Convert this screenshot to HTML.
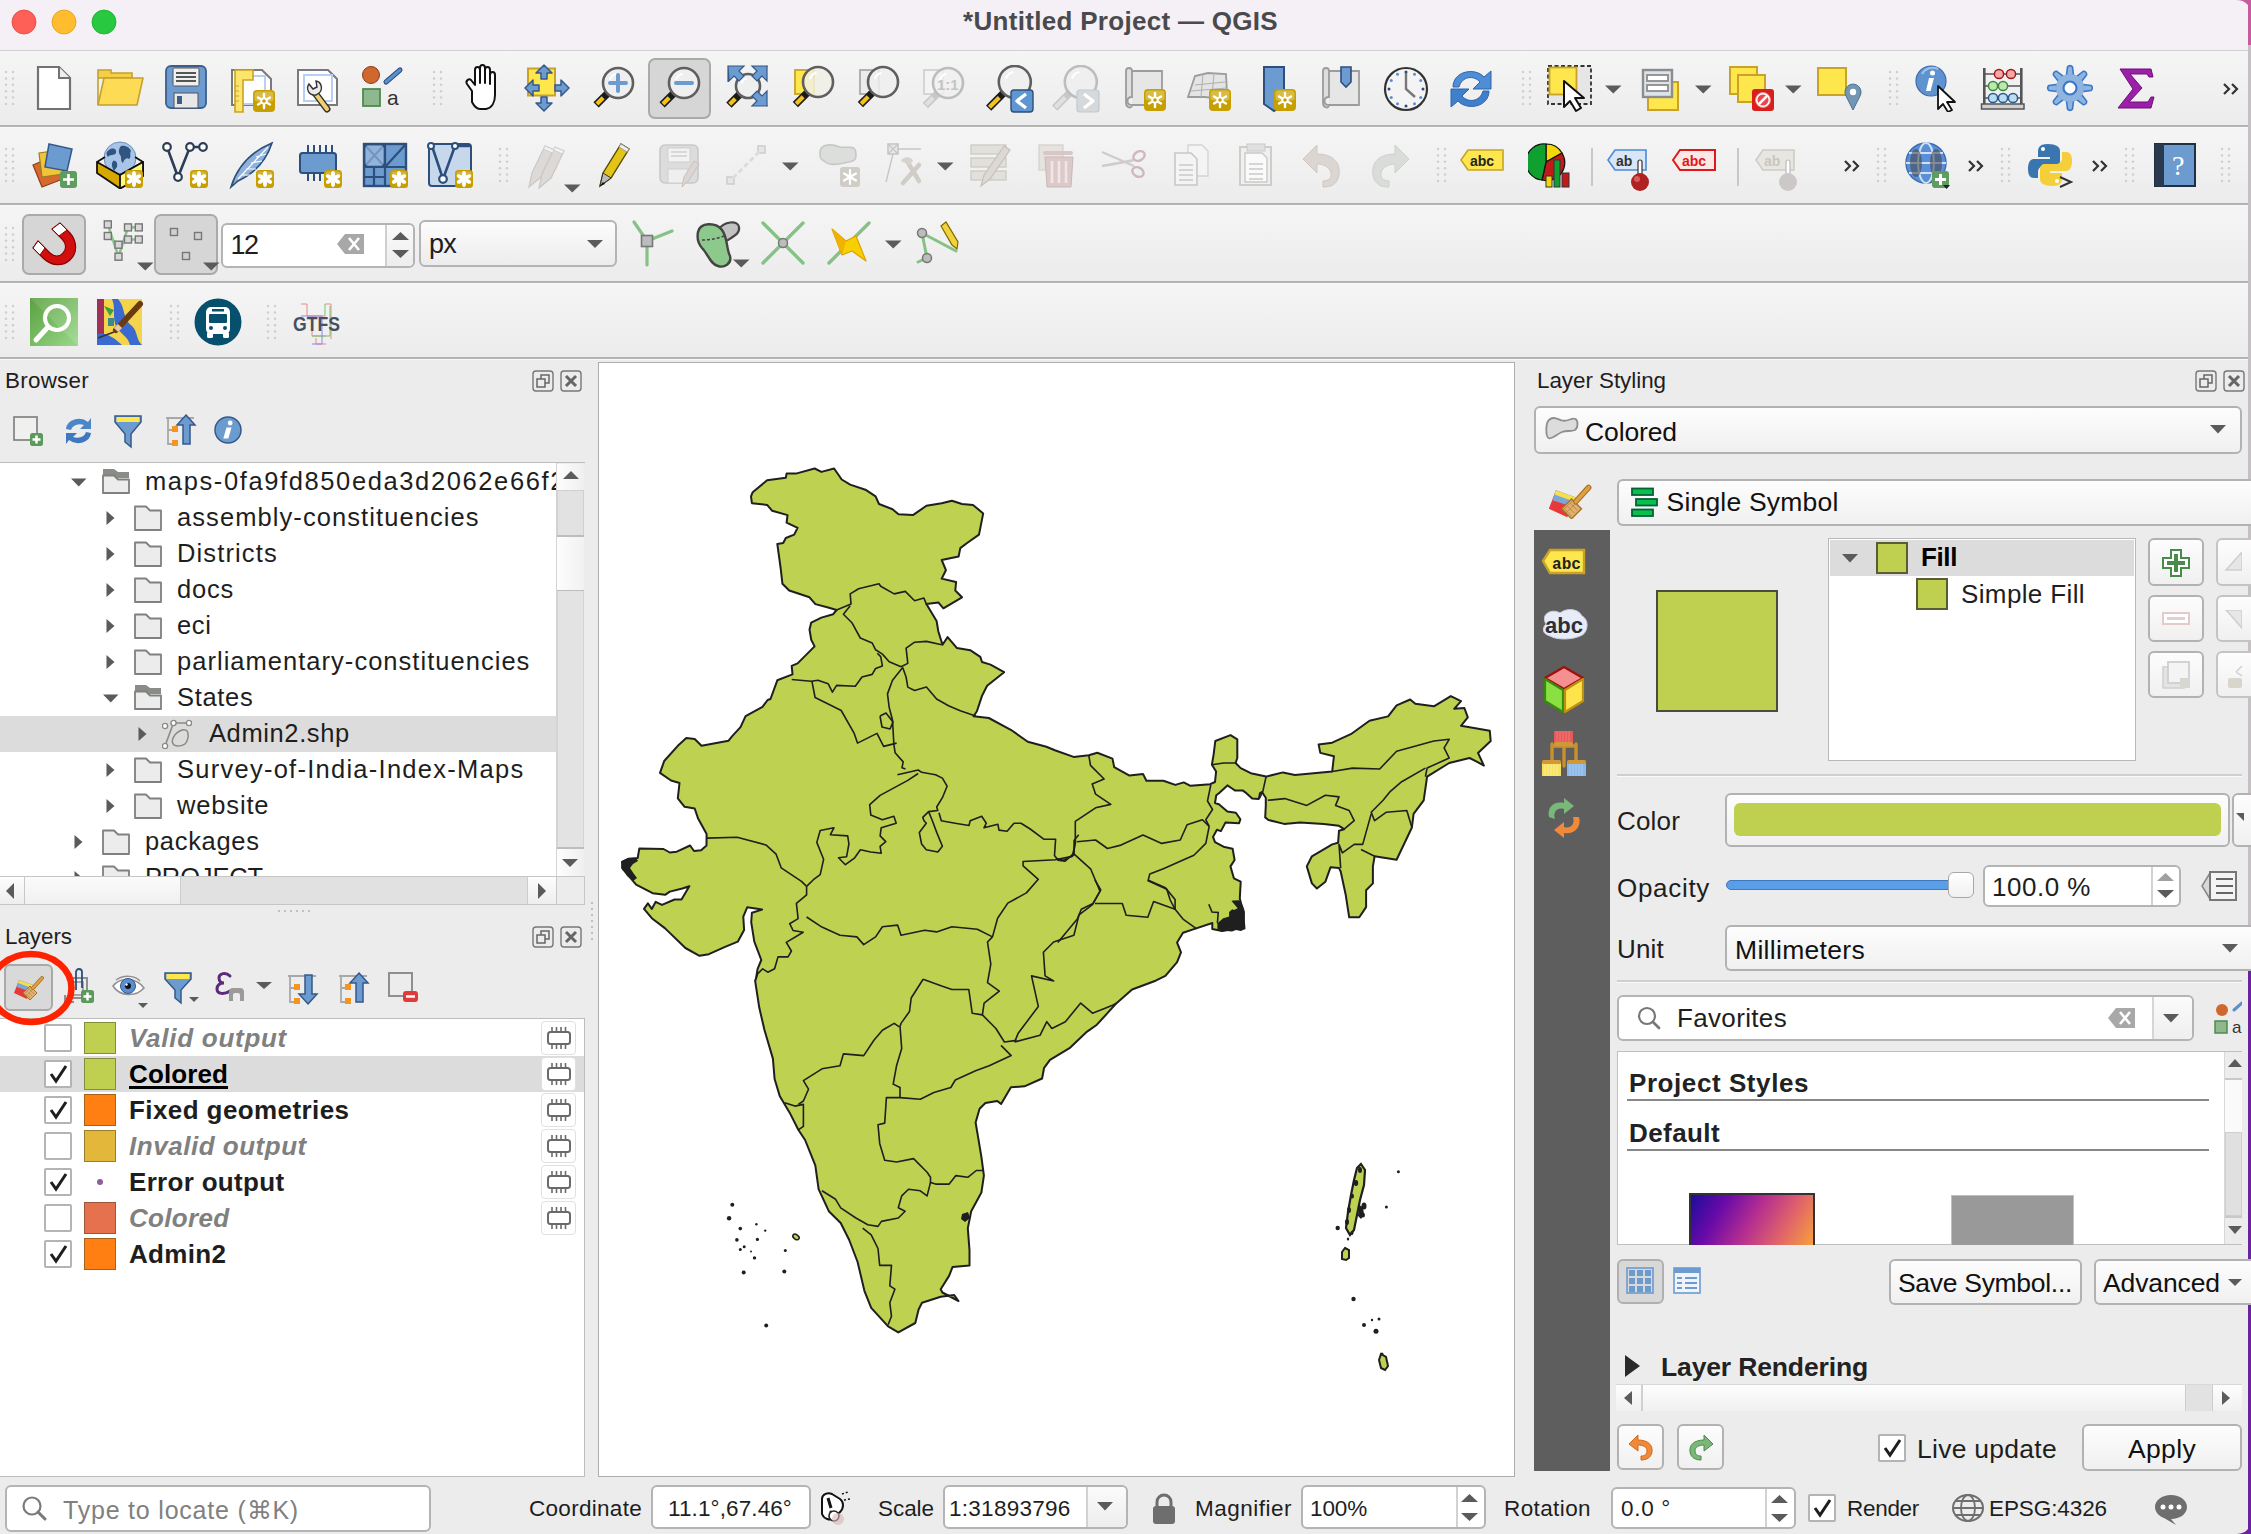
<!DOCTYPE html>
<html><head><meta charset="utf-8"><style>
html,body{margin:0;padding:0;}
body{width:2251px;height:1534px;position:relative;overflow:hidden;background:#ececec;font-family:"Liberation Sans", sans-serif;}
div,svg{box-sizing:border-box;}
</style></head><body>
<div style="position:absolute;left:0px;top:0px;width:2251px;height:51px;background:#f5f0f5;"></div>
<svg style="position:absolute;left:0px;top:0px;" width="130" height="44" viewBox="0 0 130 44"><circle cx="24" cy="22" r="12" fill="#fe5f57" stroke="#e2463f" stroke-width="0.8"/><circle cx="64" cy="22" r="12" fill="#febc2e" stroke="#e1a116" stroke-width="0.8"/><circle cx="104" cy="22" r="12" fill="#28c840" stroke="#14ae2a" stroke-width="0.8"/></svg>
<div style="position:absolute;left:963px;top:7.99px;font-size:26px;line-height:26px;font-weight:700;font-style:normal;color:#4a4a4d;white-space:pre;letter-spacing:0.303px;">*Untitled Project — QGIS</div>
<div style="position:absolute;left:0px;top:50px;width:2251px;height:1px;background:#d2d0d2;"></div>
<div style="position:absolute;left:0px;top:51px;width:2251px;height:74px;background:linear-gradient(#f5f5f5,#ececec);"></div>
<div style="position:absolute;left:0px;top:127px;width:2251px;height:76px;background:linear-gradient(#f5f5f5,#ececec);"></div>
<div style="position:absolute;left:0px;top:205px;width:2251px;height:76px;background:linear-gradient(#f5f5f5,#ececec);"></div>
<div style="position:absolute;left:0px;top:283px;width:2251px;height:76px;background:linear-gradient(#f5f5f5,#ececec);"></div>
<div style="position:absolute;left:0px;top:125px;width:2251px;height:2px;background:#b3b3b3;"></div>
<div style="position:absolute;left:0px;top:127px;width:2251px;height:1px;background:#f8f8f8;"></div>
<div style="position:absolute;left:0px;top:203px;width:2251px;height:2px;background:#b3b3b3;"></div>
<div style="position:absolute;left:0px;top:205px;width:2251px;height:1px;background:#f8f8f8;"></div>
<div style="position:absolute;left:0px;top:281px;width:2251px;height:2px;background:#b3b3b3;"></div>
<div style="position:absolute;left:0px;top:283px;width:2251px;height:1px;background:#f8f8f8;"></div>
<div style="position:absolute;left:0px;top:357px;width:2251px;height:2px;background:#b3b3b3;"></div>
<div style="position:absolute;left:0px;top:359px;width:2251px;height:1px;background:#f8f8f8;"></div>
<div style="position:absolute;left:2248px;top:0px;width:3px;height:1534px;background:#c4c0c4;"></div>
<div style="position:absolute;left:2248px;top:0px;width:3px;height:45px;background:#c85aa0;"></div>
<div style="position:absolute;left:2248px;top:960px;width:3px;height:574px;background:#6a22a0;"></div>
<svg style="position:absolute;left:2236px;top:0px;" width="15" height="16" viewBox="0 0 15 16"><path d="M0,0 H15 V16 C15,6 10,0 0,0 Z" fill="#c85aa0"/></svg>
<svg style="position:absolute;left:2236px;top:1518px;" width="15" height="16" viewBox="0 0 15 16"><path d="M0,16 H15 V0 C15,10 10,16 0,16 Z" fill="#6a22a0"/></svg>
<svg style="position:absolute;left:0;top:0" width="2251" height="400"><circle cx="6" cy="72.0" r="1.25" fill="#cfcfcf"/><circle cx="13" cy="72.0" r="1.25" fill="#cfcfcf"/><circle cx="6" cy="78.4" r="1.25" fill="#cfcfcf"/><circle cx="13" cy="78.4" r="1.25" fill="#cfcfcf"/><circle cx="6" cy="84.8" r="1.25" fill="#cfcfcf"/><circle cx="13" cy="84.8" r="1.25" fill="#cfcfcf"/><circle cx="6" cy="91.2" r="1.25" fill="#cfcfcf"/><circle cx="13" cy="91.2" r="1.25" fill="#cfcfcf"/><circle cx="6" cy="97.6" r="1.25" fill="#cfcfcf"/><circle cx="13" cy="97.6" r="1.25" fill="#cfcfcf"/><circle cx="6" cy="104.0" r="1.25" fill="#cfcfcf"/><circle cx="13" cy="104.0" r="1.25" fill="#cfcfcf"/></svg>
<svg style="position:absolute;left:30.0px;top:64.0px" width="48" height="48" viewBox="0 0 48 48"><path d="M8,3 H29 L40,14 V45 H8 Z" fill="#fff" stroke="#727272" stroke-width="2.2" stroke-linejoin="miter"/><path d="M29,3 V14 H40" fill="#efefef" stroke="#727272" stroke-width="2"/></svg>
<svg style="position:absolute;left:95.5px;top:64.0px" width="48" height="48" viewBox="0 0 48 48"><path d="M2,41 V6 H15 V9 H36 V14 H2" fill="#f6cf45" stroke="#c4a030" stroke-width="1.6"/><path d="M2,41 L8,14 H47 L41,41 Z" fill="#fedb55" stroke="#c4a030" stroke-width="1.6" stroke-linejoin="round"/></svg>
<svg style="position:absolute;left:162.0px;top:63.0px" width="48" height="48" viewBox="0 0 48 48"><rect x="4" y="3" width="40" height="42" rx="5" fill="#6b9bd1" stroke="#3b5f8c" stroke-width="1.8"/><rect x="11" y="5" width="26" height="18" rx="1.5" fill="#efefef" stroke="#555" stroke-width="1"/><path d="M14,10 H34 M14,14 H34 M14,18 H34" stroke="#555" stroke-width="1.8"/><rect x="12" y="30" width="24" height="15" fill="#e8e8e8" stroke="#555" stroke-width="1"/><rect x="15" y="33" width="5" height="8" fill="#3d5f85"/></svg>
<svg style="position:absolute;left:229.0px;top:66.0px" width="48" height="48" viewBox="0 0 48 48"><path d="M3,4 H33 L42,13 V39 H3 Z" fill="#fff" stroke="#7a7a7a" stroke-width="2"/><rect x="10" y="10" width="26" height="28" fill="none" stroke="#b8cff5" stroke-width="2"/><path d="M6,4 H24 V14 H14 V46 H6 Z" fill="#fde56b" stroke="#c9a227" stroke-width="1.6"/><path d="M6,20 H10 M6,25 H10 M6,30 H10 M6,35 H10" stroke="#c9a227" stroke-width="1.2"/><g transform="translate(24,24)"><rect x="0" y="0" width="22" height="22" rx="4" fill="#c7a000"/><rect x="1.5" y="1.5" width="19" height="10.0" rx="3" fill="#d8bb45"/><g stroke="#fff" stroke-width="2.4" stroke-linecap="round"><path d="M11.0,4.0 V18.0 M5.0,7.5 L17.0,14.5 M5.0,14.5 L17.0,7.5"/></g><circle cx="11.0" cy="11.0" r="3.6" fill="#fff"/><circle cx="11.0" cy="11.0" r="1.8" fill="#c7a000"/></g></svg>
<svg style="position:absolute;left:295.0px;top:66.0px" width="48" height="48" viewBox="0 0 48 48"><path d="M3,4 H33 L42,13 V39 H3 Z" fill="#fff" stroke="#7a7a7a" stroke-width="2"/><rect x="9" y="9" width="28" height="26" fill="none" stroke="#b8cff5" stroke-width="2"/><path d="M32,43 L20,27" stroke="#333" stroke-width="7" stroke-linecap="round"/><path d="M32,43 L20,27" stroke="#f0d070" stroke-width="4" stroke-linecap="round"/><path d="M21,29 C13,30 11,22 14,18 L18,23 L22,21 L21,15 C27,16 28,24 24,27 Z" fill="#e9e9e9" stroke="#333" stroke-width="1.4"/></svg>
<svg style="position:absolute;left:359.5px;top:64.0px" width="48" height="48" viewBox="0 0 48 48"><circle cx="11" cy="11" r="8.5" fill="#d0672f" stroke="#8a3d17" stroke-width="1"/><path d="M26,18 L40,6" stroke="#284a78" stroke-width="5" stroke-linecap="round"/><path d="M26,18 L40,6" stroke="#5a8fd0" stroke-width="3" stroke-linecap="round"/><rect x="3" y="25" width="17" height="17" fill="#8fb88f" stroke="#4f8a4f" stroke-width="1.8"/><text x="27" y="41" font-family="Liberation Sans" font-size="21" fill="#333">a</text></svg>
<svg style="position:absolute;left:0;top:0" width="2251" height="400"><circle cx="434" cy="72.0" r="1.25" fill="#cfcfcf"/><circle cx="441" cy="72.0" r="1.25" fill="#cfcfcf"/><circle cx="434" cy="78.4" r="1.25" fill="#cfcfcf"/><circle cx="441" cy="78.4" r="1.25" fill="#cfcfcf"/><circle cx="434" cy="84.8" r="1.25" fill="#cfcfcf"/><circle cx="441" cy="84.8" r="1.25" fill="#cfcfcf"/><circle cx="434" cy="91.2" r="1.25" fill="#cfcfcf"/><circle cx="441" cy="91.2" r="1.25" fill="#cfcfcf"/><circle cx="434" cy="97.6" r="1.25" fill="#cfcfcf"/><circle cx="441" cy="97.6" r="1.25" fill="#cfcfcf"/><circle cx="434" cy="104.0" r="1.25" fill="#cfcfcf"/><circle cx="441" cy="104.0" r="1.25" fill="#cfcfcf"/></svg>
<svg style="position:absolute;left:458.0px;top:64.0px" width="48" height="48" viewBox="0 0 48 48"><path d="M14,27 L9,20 C7,17 11,14 13,16 L17,21 V6 C17,2 22,2 22,6 V19 V4 C22,0 27,0 27,4 V19 V6 C27,2 32,2 32,6 V20 V11 C32,7 37,7 37,11 V31 C37,38 34,44 28,45 H22 C18,45 16,42 14,38 Z" fill="#fff" stroke="#111" stroke-width="2" stroke-linejoin="round"/></svg>
<svg style="position:absolute;left:524.0px;top:64.0px" width="48" height="48" viewBox="0 0 48 48"><rect x="4" y="4.5" width="27" height="27" fill="#fde74c" stroke="#c9a227" stroke-width="2"/><g fill="#6c9bd0" stroke="#34588a" stroke-width="1.5" stroke-linejoin="round"><path d="M20,1 L28,9 H23 V15 H17 V9 H12 Z"/><path d="M20,47 L28,39 H23 V33 H17 V39 H12 Z"/><path d="M1,24 L9,16 V21 H15 V27 H9 V32 Z"/><path d="M45,24 L37,16 V21 H31 V27 H37 V32 Z"/></g></svg>
<svg style="position:absolute;left:589.0px;top:65.0px" width="48" height="48" viewBox="0 0 48 48"><path d="M18.393500000000003,28.606499999999997 L7.079900000000004,39.9201" stroke="#1b1b1b" stroke-width="7.5" stroke-linecap="butt"/><path d="M14.150900000000004,32.84909999999999 L7.928420000000004,39.07158" stroke="#f5c21b" stroke-width="4.2"/><circle cx="29" cy="18" r="15" fill="#efefef" stroke="#5f5f5f" stroke-width="2.6"/><path d="M20.75,15.0 A9.0,9.0 0 0 1 27.5,8.7" stroke="#fff" stroke-width="2" fill="none"/><path d="M21,18 H37 M29,10 V26" stroke="#6c9bd0" stroke-width="4" stroke-linecap="round"/></svg>
<div style="position:absolute;left:648px;top:58px;width:63px;height:61px;background:#d6d6d6;border:2px solid #aaaaaa;border-radius:7px;"></div>
<svg style="position:absolute;left:655.0px;top:65.0px" width="48" height="48" viewBox="0 0 48 48"><path d="M18.393500000000003,28.606499999999997 L7.079900000000004,39.9201" stroke="#1b1b1b" stroke-width="7.5" stroke-linecap="butt"/><path d="M14.150900000000004,32.84909999999999 L7.928420000000004,39.07158" stroke="#f5c21b" stroke-width="4.2"/><circle cx="29" cy="18" r="15" fill="#efefef" stroke="#5f5f5f" stroke-width="2.6"/><path d="M20.75,15.0 A9.0,9.0 0 0 1 27.5,8.7" stroke="#fff" stroke-width="2" fill="none"/><path d="M21,18 H37" stroke="#6c9bd0" stroke-width="4" stroke-linecap="round"/></svg>
<svg style="position:absolute;left:722.0px;top:64.0px" width="48" height="48" viewBox="0 0 48 48"><path d="M17.5148,30.4852 L6.908300000000002,41.091699999999996" stroke="#1b1b1b" stroke-width="7.5" stroke-linecap="butt"/><path d="M13.272200000000002,34.727799999999995 L7.756820000000002,40.243179999999995" stroke="#f5c21b" stroke-width="4.2"/><circle cx="26" cy="22" r="12" fill="#efefef" stroke="#5f5f5f" stroke-width="2.6"/><path d="M19.4,19.6 A7.199999999999999,7.199999999999999 0 0 1 24.8,14.56" stroke="#fff" stroke-width="2" fill="none"/><g fill="#6c9bd0" stroke="#34588a" stroke-width="1.2"><path d="M6,2 H22 L17,7 L22,12 L17,17 L12,12 L7,17 Z M6,2 V18"/><path d="M46,2 H30 L35,7 L30,12 L35,17 L40,12 L45,17 V2 Z"/><path d="M46,42 H30 L35,37 L30,32 L35,27 L40,32 L45,27 V42 Z"/></g></svg>
<svg style="position:absolute;left:788.0px;top:64.0px" width="48" height="48" viewBox="0 0 48 48"><rect x="7" y="6" width="19" height="24" fill="#fde74c" stroke="#c9a227" stroke-width="1.8"/><path d="M19.393500000000003,28.606499999999997 L7.372800000000003,40.627199999999995" stroke="#1b1b1b" stroke-width="7.5" stroke-linecap="butt"/><path d="M15.150900000000004,32.84909999999999 L8.221320000000004,39.778679999999994" stroke="#f5c21b" stroke-width="4.2"/><circle cx="30" cy="18" r="15" fill="rgba(240,240,230,0.85)" stroke="#5f5f5f" stroke-width="2.6"/><path d="M21.75,15.0 A9.0,9.0 0 0 1 28.5,8.7" stroke="#fff" stroke-width="2" fill="none"/></svg>
<svg style="position:absolute;left:853.0px;top:64.0px" width="48" height="48" viewBox="0 0 48 48"><rect x="7" y="6" width="19" height="24" fill="#ececec" stroke="#aaaaaa" stroke-width="1.8"/><path d="M19.393500000000003,28.606499999999997 L7.372800000000003,40.627199999999995" stroke="#1b1b1b" stroke-width="7.5" stroke-linecap="butt"/><path d="M15.150900000000004,32.84909999999999 L8.221320000000004,39.778679999999994" stroke="#f5c21b" stroke-width="4.2"/><circle cx="30" cy="18" r="15" fill="rgba(238,238,238,0.85)" stroke="#5f5f5f" stroke-width="2.6"/><path d="M21.75,15.0 A9.0,9.0 0 0 1 28.5,8.7" stroke="#fff" stroke-width="2" fill="none"/></svg>
<svg style="position:absolute;left:919.0px;top:65.0px" width="48" height="48" viewBox="0 0 48 48"><rect x="5" y="5" width="19" height="24" fill="#f4f4f4" stroke="#d2d2d2" stroke-width="1.8"/><path d="M18.393500000000003,28.606499999999997 L6.372800000000003,40.627199999999995" stroke="#c8c8c8" stroke-width="7.5" stroke-linecap="butt"/><path d="M14.150900000000004,32.84909999999999 L7.221320000000003,39.778679999999994" stroke="#e0e0e0" stroke-width="4.2"/><circle cx="29" cy="18" r="15" fill="rgba(240,240,240,0.8)" stroke="#bdbdbd" stroke-width="2.6"/><path d="M20.75,15.0 A9.0,9.0 0 0 1 27.5,8.7" stroke="#fff" stroke-width="2" fill="none"/><text x="18" y="25" font-family="Liberation Sans" font-weight="bold" font-size="15" fill="#c4c4c4">1:1</text></svg>
<svg style="position:absolute;left:986.0px;top:65.0px" width="48" height="48" viewBox="0 0 48 48"><path d="M17.486400000000003,28.2136 L2.637300000000005,43.0627" stroke="#1b1b1b" stroke-width="7.5" stroke-linecap="butt"/><path d="M13.243800000000004,32.456199999999995 L3.485820000000005,42.21418" stroke="#f5c21b" stroke-width="4.2"/><circle cx="28.8" cy="16.9" r="16" fill="#efefef" stroke="#5f5f5f" stroke-width="2.6"/><path d="M20.0,13.7 A9.6,9.6 0 0 1 27.2,6.979999999999999" stroke="#fff" stroke-width="2" fill="none"/><rect x="25" y="25" width="22" height="22" rx="3" fill="#5f95d0" stroke="#2c4f7a" stroke-width="1.4"/><path d="M40,29 L31,36 L40,43" fill="none" stroke="#fff" stroke-width="3.4" stroke-linejoin="round"/></svg>
<svg style="position:absolute;left:1052.0px;top:65.0px" width="48" height="48" viewBox="0 0 48 48"><path d="M17.486400000000003,28.2136 L2.637300000000005,43.0627" stroke="#c8c8c8" stroke-width="7.5" stroke-linecap="butt"/><path d="M13.243800000000004,32.456199999999995 L3.485820000000005,42.21418" stroke="#e0e0e0" stroke-width="4.2"/><circle cx="28.8" cy="16.9" r="16" fill="#efefef" stroke="#bdbdbd" stroke-width="2.6"/><path d="M20.0,13.7 A9.6,9.6 0 0 1 27.2,6.979999999999999" stroke="#fff" stroke-width="2" fill="none"/><rect x="25" y="25" width="22" height="22" rx="3" fill="#d6d9dc" stroke="#c4c8cc" stroke-width="1.2"/><path d="M32,29 L41,36 L32,43" fill="none" stroke="#fff" stroke-width="3.4" stroke-linejoin="round"/></svg>
<svg style="position:absolute;left:1120.0px;top:65.0px" width="48" height="48" viewBox="0 0 48 48"><path d="M12,6 H42 V40 H12" fill="#e6e6e6" stroke="#9c9c9c" stroke-width="1.8"/><path d="M12,40 C6,40 6,32 12,32 V6 C12,2 6,2 6,6 V38 C6,43 12,44 12,40" fill="#dedede" stroke="#9c9c9c" stroke-width="1.8"/><g transform="translate(24,24)"><rect x="0" y="0" width="22" height="22" rx="4" fill="#c7a000"/><rect x="1.5" y="1.5" width="19" height="10.0" rx="3" fill="#d8bb45"/><g stroke="#fff" stroke-width="2.4" stroke-linecap="round"><path d="M11.0,4.0 V18.0 M5.0,7.5 L17.0,14.5 M5.0,14.5 L17.0,7.5"/></g><circle cx="11.0" cy="11.0" r="3.6" fill="#fff"/><circle cx="11.0" cy="11.0" r="1.8" fill="#c7a000"/></g></svg>
<svg style="position:absolute;left:1185.0px;top:65.0px" width="48" height="48" viewBox="0 0 48 48"><path d="M3,32 L10,11 L23,8 L41,9 L42,29 L28,33 L20,32 Z" fill="#e4e4e4" stroke="#9c9c9c" stroke-width="1.8"/><path d="M10,20 L40,17 M6,26 L42,23 M18,9 L16,32 M29,8 L27,33" stroke="#b0b0b0" stroke-width="1" fill="none"/><g transform="translate(24,24)"><rect x="0" y="0" width="22" height="22" rx="4" fill="#c7a000"/><rect x="1.5" y="1.5" width="19" height="10.0" rx="3" fill="#d8bb45"/><g stroke="#fff" stroke-width="2.4" stroke-linecap="round"><path d="M11.0,4.0 V18.0 M5.0,7.5 L17.0,14.5 M5.0,14.5 L17.0,7.5"/></g><circle cx="11.0" cy="11.0" r="3.6" fill="#fff"/><circle cx="11.0" cy="11.0" r="1.8" fill="#c7a000"/></g></svg>
<svg style="position:absolute;left:1252.0px;top:65.0px" width="48" height="48" viewBox="0 0 48 48"><path d="M12,2 H32 V39 L22,46 L12,39 Z" fill="#6b9bd1" stroke="#2e4f7c" stroke-width="2"/><g transform="translate(22,24)"><rect x="0" y="0" width="22" height="22" rx="4" fill="#c7a000"/><rect x="1.5" y="1.5" width="19" height="10.0" rx="3" fill="#d8bb45"/><g stroke="#fff" stroke-width="2.4" stroke-linecap="round"><path d="M11.0,4.0 V18.0 M5.0,7.5 L17.0,14.5 M5.0,14.5 L17.0,7.5"/></g><circle cx="11.0" cy="11.0" r="3.6" fill="#fff"/><circle cx="11.0" cy="11.0" r="1.8" fill="#c7a000"/></g></svg>
<svg style="position:absolute;left:1317.0px;top:65.0px" width="48" height="48" viewBox="0 0 48 48"><path d="M12,6 H42 V40 H12" fill="#e6e6e6" stroke="#9c9c9c" stroke-width="1.8"/><path d="M12,40 C6,40 6,32 12,32 V6 C12,2 6,2 6,6 V38 C6,43 12,44 12,40" fill="#dedede" stroke="#9c9c9c" stroke-width="1.8"/><path d="M24,2 H34 V17 L29,22 L24,17 Z" fill="#6b9bd1" stroke="#2e4f7c" stroke-width="1.6"/></svg>
<svg style="position:absolute;left:1382.0px;top:65.0px" width="48" height="48" viewBox="0 0 48 48"><circle cx="24" cy="24" r="21" fill="#f4f4f4" stroke="#333" stroke-width="2.2"/><circle cx="24.00" cy="7.00" r="1.5" fill="#2b4a7a"/><circle cx="32.50" cy="9.28" r="1.5" fill="#5a8ed0"/><circle cx="38.72" cy="15.50" r="1.5" fill="#5a8ed0"/><circle cx="41.00" cy="24.00" r="1.5" fill="#2b4a7a"/><circle cx="38.72" cy="32.50" r="1.5" fill="#5a8ed0"/><circle cx="32.50" cy="38.72" r="1.5" fill="#5a8ed0"/><circle cx="24.00" cy="41.00" r="1.5" fill="#2b4a7a"/><circle cx="15.50" cy="38.72" r="1.5" fill="#5a8ed0"/><circle cx="9.28" cy="32.50" r="1.5" fill="#5a8ed0"/><circle cx="7.00" cy="24.00" r="1.5" fill="#2b4a7a"/><circle cx="9.28" cy="15.50" r="1.5" fill="#5a8ed0"/><circle cx="15.50" cy="9.28" r="1.5" fill="#5a8ed0"/><path d="M24,8 V24 L33,32" fill="none" stroke="#777" stroke-width="2.4"/></svg>
<svg style="position:absolute;left:1447.0px;top:65.0px" width="48" height="48" viewBox="0 0 48 48"><path d="M6,22 C6,6 28,2 37,12 L44,6 V24 H26 L33,17 C27,10 15,11 12,22 Z" fill="#4f8ed6" stroke="#2d64ad" stroke-width="1"/><path d="M42,26 C42,42 20,46 11,36 L4,42 V24 H22 L15,31 C21,38 33,37 36,26 Z" fill="#3f7fcb" stroke="#2d64ad" stroke-width="1"/></svg>
<svg style="position:absolute;left:0;top:0" width="2251" height="400"><circle cx="1523" cy="72.0" r="1.25" fill="#cfcfcf"/><circle cx="1530" cy="72.0" r="1.25" fill="#cfcfcf"/><circle cx="1523" cy="78.4" r="1.25" fill="#cfcfcf"/><circle cx="1530" cy="78.4" r="1.25" fill="#cfcfcf"/><circle cx="1523" cy="84.8" r="1.25" fill="#cfcfcf"/><circle cx="1530" cy="84.8" r="1.25" fill="#cfcfcf"/><circle cx="1523" cy="91.2" r="1.25" fill="#cfcfcf"/><circle cx="1530" cy="91.2" r="1.25" fill="#cfcfcf"/><circle cx="1523" cy="97.6" r="1.25" fill="#cfcfcf"/><circle cx="1530" cy="97.6" r="1.25" fill="#cfcfcf"/><circle cx="1523" cy="104.0" r="1.25" fill="#cfcfcf"/><circle cx="1530" cy="104.0" r="1.25" fill="#cfcfcf"/></svg>
<svg style="position:absolute;left:1546.0px;top:64.0px" width="48" height="48" viewBox="0 0 48 48"><rect x="2" y="2" width="43" height="38" fill="#e6e6e6" stroke="#333" stroke-width="1.8" stroke-dasharray="4,2.5"/><rect x="3.5" y="3.5" width="27" height="27" fill="#fde74c" stroke="#c9a227" stroke-width="1.8"/><path d="M18,17 L18,43 L24,37 L30,47 L35,44 L29,34 L38,34 Z" fill="#fff" stroke="#111" stroke-width="2" stroke-linejoin="round"/></svg>
<svg style="position:absolute;left:1605px;top:85px;" width="17" height="9" viewBox="0 0 17 9"><path d="M0,0.5 H16.5 L8.25,8.5 Z" fill="#5b5b5b"/></svg>
<svg style="position:absolute;left:1640.0px;top:67.0px" width="48" height="48" viewBox="0 0 48 48"><rect x="8" y="15" width="30" height="28" fill="#fde74c" stroke="#c9a227" stroke-width="2"/><rect x="3" y="3" width="29" height="27" fill="#dde3ea" stroke="#8c8c8c" stroke-width="2.4"/><rect x="7" y="8" width="21" height="6" fill="#fff" stroke="#8c8c8c" stroke-width="1.8"/><rect x="7" y="18" width="21" height="6" fill="#fff" stroke="#8c8c8c" stroke-width="1.8"/></svg>
<svg style="position:absolute;left:1695px;top:85px;" width="17" height="9" viewBox="0 0 17 9"><path d="M0,0.5 H16.5 L8.25,8.5 Z" fill="#5b5b5b"/></svg>
<svg style="position:absolute;left:1728.0px;top:65.0px" width="48" height="48" viewBox="0 0 48 48"><rect x="2" y="2" width="27" height="27" fill="#fde74c" stroke="#c9a227" stroke-width="2"/><rect x="10" y="10" width="27" height="27" fill="#fde74c" stroke="#c9a227" stroke-width="2"/><rect x="24" y="24" width="22" height="22" rx="3" fill="#d91e1e"/><circle cx="35" cy="35" r="7.5" fill="#fff" stroke="#e88" stroke-width="1"/><circle cx="35" cy="35" r="5.5" fill="#e44"/><path d="M31,39 L39,31" stroke="#fff" stroke-width="2.5"/></svg>
<svg style="position:absolute;left:1785px;top:85px;" width="17" height="9" viewBox="0 0 17 9"><path d="M0,0.5 H16.5 L8.25,8.5 Z" fill="#5b5b5b"/></svg>
<svg style="position:absolute;left:1816.0px;top:64.0px" width="48" height="48" viewBox="0 0 48 48"><rect x="2" y="4" width="28" height="27" fill="#fde74c" stroke="#c9a227" stroke-width="2"/><path d="M37,46 L30,32 A8,8 0 1 1 44,32 Z" fill="#7396b4" stroke="#4d6f8d" stroke-width="1"/><circle cx="37" cy="28" r="3.2" fill="#fff"/></svg>
<svg style="position:absolute;left:0;top:0" width="2251" height="400"><circle cx="1890" cy="72.0" r="1.25" fill="#cfcfcf"/><circle cx="1897" cy="72.0" r="1.25" fill="#cfcfcf"/><circle cx="1890" cy="78.4" r="1.25" fill="#cfcfcf"/><circle cx="1897" cy="78.4" r="1.25" fill="#cfcfcf"/><circle cx="1890" cy="84.8" r="1.25" fill="#cfcfcf"/><circle cx="1897" cy="84.8" r="1.25" fill="#cfcfcf"/><circle cx="1890" cy="91.2" r="1.25" fill="#cfcfcf"/><circle cx="1897" cy="91.2" r="1.25" fill="#cfcfcf"/><circle cx="1890" cy="97.6" r="1.25" fill="#cfcfcf"/><circle cx="1897" cy="97.6" r="1.25" fill="#cfcfcf"/><circle cx="1890" cy="104.0" r="1.25" fill="#cfcfcf"/><circle cx="1897" cy="104.0" r="1.25" fill="#cfcfcf"/></svg>
<svg style="position:absolute;left:1914.0px;top:64.0px" width="48" height="48" viewBox="0 0 48 48"><circle cx="17" cy="17" r="15" fill="#5f92d0" stroke="#3a6aa5" stroke-width="1.2"/><path d="M8,10 A12,12 0 0 1 24,5" stroke="#9cc0ea" stroke-width="2" fill="none"/><path d="M15,14 H20 L16.5,27 H12 Z" fill="#fff"/><circle cx="18.5" cy="9" r="2.5" fill="#fff"/><path d="M24,22 L24,45 L29,40 L34,48 L38,46 L33,38 L41,38 Z" fill="#fff" stroke="#111" stroke-width="1.8" stroke-linejoin="round"/></svg>
<svg style="position:absolute;left:1980.0px;top:64.0px" width="48" height="48" viewBox="0 0 48 48"><rect x="3" y="4" width="2.6" height="38" fill="#555"/><rect x="40" y="4" width="2.6" height="38" fill="#555"/><rect x="1.5" y="40" width="42.5" height="5" fill="#d0d0d0" stroke="#555" stroke-width="1.5"/><path d="M5,10 H40 M5,22 H40 M5,34 H40" stroke="#555" stroke-width="1.6"/><circle cx="19" cy="10" r="4.6" fill="#f4a8a8" stroke="#a01818" stroke-width="1.5"/><circle cx="31" cy="10" r="4.6" fill="#f4a8a8" stroke="#a01818" stroke-width="1.5"/><circle cx="13" cy="22" r="4.6" fill="#bce8b4" stroke="#3a8a3a" stroke-width="1.5"/><circle cx="23" cy="22" r="4.6" fill="#bce8b4" stroke="#3a8a3a" stroke-width="1.5"/><circle cx="13" cy="34" r="4.6" fill="#bcdcf4" stroke="#2a5a8a" stroke-width="1.5"/><circle cx="23" cy="34" r="4.6" fill="#bcdcf4" stroke="#2a5a8a" stroke-width="1.5"/><circle cx="33" cy="34" r="4.6" fill="#bcdcf4" stroke="#2a5a8a" stroke-width="1.5"/></svg>
<svg style="position:absolute;left:2046.0px;top:64.0px" width="48" height="48" viewBox="0 0 48 48"><path d="M20.5,11 L21.5,3 A3,3 0 0 1 26.5,3 L27.5,11 Z" fill="#8fb4e0" stroke="#3a78c8" stroke-width="1.6" transform="rotate(0 24 24)"/><path d="M20.5,11 L21.5,3 A3,3 0 0 1 26.5,3 L27.5,11 Z" fill="#8fb4e0" stroke="#3a78c8" stroke-width="1.6" transform="rotate(45 24 24)"/><path d="M20.5,11 L21.5,3 A3,3 0 0 1 26.5,3 L27.5,11 Z" fill="#8fb4e0" stroke="#3a78c8" stroke-width="1.6" transform="rotate(90 24 24)"/><path d="M20.5,11 L21.5,3 A3,3 0 0 1 26.5,3 L27.5,11 Z" fill="#8fb4e0" stroke="#3a78c8" stroke-width="1.6" transform="rotate(135 24 24)"/><path d="M20.5,11 L21.5,3 A3,3 0 0 1 26.5,3 L27.5,11 Z" fill="#8fb4e0" stroke="#3a78c8" stroke-width="1.6" transform="rotate(180 24 24)"/><path d="M20.5,11 L21.5,3 A3,3 0 0 1 26.5,3 L27.5,11 Z" fill="#8fb4e0" stroke="#3a78c8" stroke-width="1.6" transform="rotate(225 24 24)"/><path d="M20.5,11 L21.5,3 A3,3 0 0 1 26.5,3 L27.5,11 Z" fill="#8fb4e0" stroke="#3a78c8" stroke-width="1.6" transform="rotate(270 24 24)"/><path d="M20.5,11 L21.5,3 A3,3 0 0 1 26.5,3 L27.5,11 Z" fill="#8fb4e0" stroke="#3a78c8" stroke-width="1.6" transform="rotate(315 24 24)"/><circle cx="24" cy="24" r="14" fill="#8fb4e0"/><circle cx="24" cy="24" r="6.5" fill="#fff" stroke="#3a78c8" stroke-width="2.2"/></svg>
<svg style="position:absolute;left:2112.0px;top:64.0px" width="48" height="48" viewBox="0 0 48 48"><path d="M8,5 H39 L41,13 H37 L35,10 H18 L30,24 L17,38 H36 L39,33 H42 L39,44 H6 L21,25 Z" fill="#9b1fa8" stroke="#6d1076" stroke-width="1"/></svg>
<svg style="position:absolute;left:2222px;top:81px;" width="18" height="16" viewBox="0 0 18 16"><path d="M2,3 L7,8 L2,13 M10,3 L15,8 L10,13" fill="none" stroke="#333" stroke-width="2.2"/></svg>
<svg style="position:absolute;left:0;top:0" width="2251" height="400"><circle cx="6" cy="149.0" r="1.25" fill="#cfcfcf"/><circle cx="13" cy="149.0" r="1.25" fill="#cfcfcf"/><circle cx="6" cy="155.4" r="1.25" fill="#cfcfcf"/><circle cx="13" cy="155.4" r="1.25" fill="#cfcfcf"/><circle cx="6" cy="161.8" r="1.25" fill="#cfcfcf"/><circle cx="13" cy="161.8" r="1.25" fill="#cfcfcf"/><circle cx="6" cy="168.2" r="1.25" fill="#cfcfcf"/><circle cx="13" cy="168.2" r="1.25" fill="#cfcfcf"/><circle cx="6" cy="174.6" r="1.25" fill="#cfcfcf"/><circle cx="13" cy="174.6" r="1.25" fill="#cfcfcf"/><circle cx="6" cy="181.0" r="1.25" fill="#cfcfcf"/><circle cx="13" cy="181.0" r="1.25" fill="#cfcfcf"/></svg>
<svg style="position:absolute;left:30.0px;top:141.0px" width="48" height="48" viewBox="0 0 48 48"><path d="M3,24 L24,15 L33,38 L12,46 Z" fill="#d8692e" stroke="#8a4018" stroke-width="1.2"/><path d="M9,12 L30,9 L33,33 L12,36 Z" fill="#f0c53a" stroke="#9b7c20" stroke-width="1.2"/><path d="M19,3 L42,8 L37,30 L15,26 Z" fill="#6c9bd0" stroke="#34588a" stroke-width="1.5"/><g transform="translate(30,30)"><rect width="17" height="17" rx="3" fill="#5f9c5f"/><path d="M8.5,3 V14 M3,8.5 H14" stroke="#fff" stroke-width="2.6"/></g></svg>
<svg style="position:absolute;left:96.0px;top:141.0px" width="48" height="48" viewBox="0 0 48 48"><circle cx="24" cy="17" r="16" fill="#a8c5e8" stroke="#6a8fbf" stroke-width="1"/><path d="M13,9 C17,6 21,8 20,12 C18,15 14,13 12,16 C10,13 10,11 13,9 Z M25,5 C30,4 34,7 35,10 C33,13 36,16 33,18 C30,16 28,19 27,22 C24,20 26,16 24,14 C22,11 23,7 25,5 Z M17,20 C20,19 22,22 21,26 L18,30 C16,26 15,23 17,20 Z" fill="#2f5580"/><path d="M1,21 L24,34 L47,21 L47,35 L24,47.5 L1,32 Z" fill="#d6a800" stroke="#111" stroke-width="1.8" stroke-linejoin="round"/><path d="M24,34 L47,21 V35 L24,47.5 Z" fill="#fff67a" stroke="#111" stroke-width="1.8" stroke-linejoin="round"/><path d="M1,21 L9,16 M47,21 L39,16" stroke="#111" stroke-width="1.8"/><g transform="translate(29,29)"><rect width="18" height="18" rx="3.5" fill="#c7a000"/><rect x="1.5" y="1.5" width="15" height="7.0" rx="2.5" fill="#d4b440"/><ellipse cx="9.0" cy="4.4" rx="2" ry="3.4" fill="#fff" transform="rotate(0 9.0 9.0)"/><ellipse cx="9.0" cy="4.4" rx="2" ry="3.4" fill="#fff" transform="rotate(60 9.0 9.0)"/><ellipse cx="9.0" cy="4.4" rx="2" ry="3.4" fill="#fff" transform="rotate(120 9.0 9.0)"/><ellipse cx="9.0" cy="4.4" rx="2" ry="3.4" fill="#fff" transform="rotate(180 9.0 9.0)"/><ellipse cx="9.0" cy="4.4" rx="2" ry="3.4" fill="#fff" transform="rotate(240 9.0 9.0)"/><ellipse cx="9.0" cy="4.4" rx="2" ry="3.4" fill="#fff" transform="rotate(300 9.0 9.0)"/><circle cx="9.0" cy="9.0" r="2" fill="#fff"/></g></svg>
<svg style="position:absolute;left:162.0px;top:141.0px" width="48" height="48" viewBox="0 0 48 48"><path d="M5,6 L16,36 L28,6 H41" fill="none" stroke="#2c3e55" stroke-width="2.6"/><circle cx="5" cy="6" r="3.8" fill="#fff" stroke="#2c3e55" stroke-width="2.2"/><circle cx="16" cy="36" r="3.8" fill="#fff" stroke="#2c3e55" stroke-width="2.2"/><circle cx="28" cy="6" r="3.8" fill="#fff" stroke="#2c3e55" stroke-width="2.2"/><circle cx="41" cy="6" r="3.8" fill="#fff" stroke="#2c3e55" stroke-width="2.2"/><g transform="translate(28,29)"><rect width="18" height="18" rx="3.5" fill="#c7a000"/><rect x="1.5" y="1.5" width="15" height="7.0" rx="2.5" fill="#d4b440"/><ellipse cx="9.0" cy="4.4" rx="2" ry="3.4" fill="#fff" transform="rotate(0 9.0 9.0)"/><ellipse cx="9.0" cy="4.4" rx="2" ry="3.4" fill="#fff" transform="rotate(60 9.0 9.0)"/><ellipse cx="9.0" cy="4.4" rx="2" ry="3.4" fill="#fff" transform="rotate(120 9.0 9.0)"/><ellipse cx="9.0" cy="4.4" rx="2" ry="3.4" fill="#fff" transform="rotate(180 9.0 9.0)"/><ellipse cx="9.0" cy="4.4" rx="2" ry="3.4" fill="#fff" transform="rotate(240 9.0 9.0)"/><ellipse cx="9.0" cy="4.4" rx="2" ry="3.4" fill="#fff" transform="rotate(300 9.0 9.0)"/><circle cx="9.0" cy="9.0" r="2" fill="#fff"/></g></svg>
<svg style="position:absolute;left:228.0px;top:141.0px" width="48" height="48" viewBox="0 0 48 48"><path d="M3,46 C8,30 20,12 44,2 C40,14 32,30 10,40 Z" fill="#8fb2dc" stroke="#2c4f7c" stroke-width="1.6"/><path d="M10,38 L40,6 M14,34 L22,34 M18,28 L28,28 M23,22 L34,20 M28,16 L38,13" stroke="#fff" stroke-width="1.2"/><g transform="translate(28,29)"><rect width="18" height="18" rx="3.5" fill="#c7a000"/><rect x="1.5" y="1.5" width="15" height="7.0" rx="2.5" fill="#d4b440"/><ellipse cx="9.0" cy="4.4" rx="2" ry="3.4" fill="#fff" transform="rotate(0 9.0 9.0)"/><ellipse cx="9.0" cy="4.4" rx="2" ry="3.4" fill="#fff" transform="rotate(60 9.0 9.0)"/><ellipse cx="9.0" cy="4.4" rx="2" ry="3.4" fill="#fff" transform="rotate(120 9.0 9.0)"/><ellipse cx="9.0" cy="4.4" rx="2" ry="3.4" fill="#fff" transform="rotate(180 9.0 9.0)"/><ellipse cx="9.0" cy="4.4" rx="2" ry="3.4" fill="#fff" transform="rotate(240 9.0 9.0)"/><ellipse cx="9.0" cy="4.4" rx="2" ry="3.4" fill="#fff" transform="rotate(300 9.0 9.0)"/><circle cx="9.0" cy="9.0" r="2" fill="#fff"/></g></svg>
<svg style="position:absolute;left:296.0px;top:141.0px" width="48" height="48" viewBox="0 0 48 48"><path d="M12,4 V12 M18,4 V12 M24,4 V12 M30,4 V12 M36,4 V12 M12,32 V40 M18,32 V40 M24,32 V40" stroke="#2c4f7c" stroke-width="2"/><rect x="4" y="12" width="36" height="20" rx="2.5" fill="#6c9bd0" stroke="#2c4f7c" stroke-width="2"/><g transform="translate(28,29)"><rect width="18" height="18" rx="3.5" fill="#c7a000"/><rect x="1.5" y="1.5" width="15" height="7.0" rx="2.5" fill="#d4b440"/><ellipse cx="9.0" cy="4.4" rx="2" ry="3.4" fill="#fff" transform="rotate(0 9.0 9.0)"/><ellipse cx="9.0" cy="4.4" rx="2" ry="3.4" fill="#fff" transform="rotate(60 9.0 9.0)"/><ellipse cx="9.0" cy="4.4" rx="2" ry="3.4" fill="#fff" transform="rotate(120 9.0 9.0)"/><ellipse cx="9.0" cy="4.4" rx="2" ry="3.4" fill="#fff" transform="rotate(180 9.0 9.0)"/><ellipse cx="9.0" cy="4.4" rx="2" ry="3.4" fill="#fff" transform="rotate(240 9.0 9.0)"/><ellipse cx="9.0" cy="4.4" rx="2" ry="3.4" fill="#fff" transform="rotate(300 9.0 9.0)"/><circle cx="9.0" cy="9.0" r="2" fill="#fff"/></g></svg>
<svg style="position:absolute;left:361.0px;top:141.0px" width="48" height="48" viewBox="0 0 48 48"><rect x="3" y="3" width="42" height="42" fill="#6c9bd0" stroke="#2c4f7c" stroke-width="2.4"/><path d="M3,26 H45 M24,3 V45 M3,3 L24,26 M24,3 L3,26 M45,3 L24,26 M3,36 H24 M13,26 V45" stroke="#2c4f7c" stroke-width="2.2"/><rect x="5" y="5" width="17" height="19" fill="#a8c5e8" opacity="0.6"/><g transform="translate(29,29)"><rect width="18" height="18" rx="3.5" fill="#c7a000"/><rect x="1.5" y="1.5" width="15" height="7.0" rx="2.5" fill="#d4b440"/><ellipse cx="9.0" cy="4.4" rx="2" ry="3.4" fill="#fff" transform="rotate(0 9.0 9.0)"/><ellipse cx="9.0" cy="4.4" rx="2" ry="3.4" fill="#fff" transform="rotate(60 9.0 9.0)"/><ellipse cx="9.0" cy="4.4" rx="2" ry="3.4" fill="#fff" transform="rotate(120 9.0 9.0)"/><ellipse cx="9.0" cy="4.4" rx="2" ry="3.4" fill="#fff" transform="rotate(180 9.0 9.0)"/><ellipse cx="9.0" cy="4.4" rx="2" ry="3.4" fill="#fff" transform="rotate(240 9.0 9.0)"/><ellipse cx="9.0" cy="4.4" rx="2" ry="3.4" fill="#fff" transform="rotate(300 9.0 9.0)"/><circle cx="9.0" cy="9.0" r="2" fill="#fff"/></g></svg>
<svg style="position:absolute;left:426.0px;top:141.0px" width="48" height="48" viewBox="0 0 48 48"><rect x="3" y="3" width="42" height="42" rx="3" fill="#c8d8ec" stroke="#2c4f7c" stroke-width="2"/><path d="M6,5 L17,38 L29,5 H44" fill="none" stroke="#2c4f7c" stroke-width="2.6"/><circle cx="17" cy="38" r="3.8" fill="#fff" stroke="#2c4f7c" stroke-width="2.2"/><circle cx="29" cy="5" r="3" fill="#fff" stroke="#2c4f7c" stroke-width="2"/><circle cx="5" cy="5" r="3" fill="#fff" stroke="#2c4f7c" stroke-width="2"/><g transform="translate(29,29)"><rect width="18" height="18" rx="3.5" fill="#c7a000"/><rect x="1.5" y="1.5" width="15" height="7.0" rx="2.5" fill="#d4b440"/><ellipse cx="9.0" cy="4.4" rx="2" ry="3.4" fill="#fff" transform="rotate(0 9.0 9.0)"/><ellipse cx="9.0" cy="4.4" rx="2" ry="3.4" fill="#fff" transform="rotate(60 9.0 9.0)"/><ellipse cx="9.0" cy="4.4" rx="2" ry="3.4" fill="#fff" transform="rotate(120 9.0 9.0)"/><ellipse cx="9.0" cy="4.4" rx="2" ry="3.4" fill="#fff" transform="rotate(180 9.0 9.0)"/><ellipse cx="9.0" cy="4.4" rx="2" ry="3.4" fill="#fff" transform="rotate(240 9.0 9.0)"/><ellipse cx="9.0" cy="4.4" rx="2" ry="3.4" fill="#fff" transform="rotate(300 9.0 9.0)"/><circle cx="9.0" cy="9.0" r="2" fill="#fff"/></g></svg>
<svg style="position:absolute;left:0;top:0" width="2251" height="400"><circle cx="500" cy="149.0" r="1.25" fill="#cfcfcf"/><circle cx="507" cy="149.0" r="1.25" fill="#cfcfcf"/><circle cx="500" cy="155.4" r="1.25" fill="#cfcfcf"/><circle cx="507" cy="155.4" r="1.25" fill="#cfcfcf"/><circle cx="500" cy="161.8" r="1.25" fill="#cfcfcf"/><circle cx="507" cy="161.8" r="1.25" fill="#cfcfcf"/><circle cx="500" cy="168.2" r="1.25" fill="#cfcfcf"/><circle cx="507" cy="168.2" r="1.25" fill="#cfcfcf"/><circle cx="500" cy="174.6" r="1.25" fill="#cfcfcf"/><circle cx="507" cy="174.6" r="1.25" fill="#cfcfcf"/><circle cx="500" cy="181.0" r="1.25" fill="#cfcfcf"/><circle cx="507" cy="181.0" r="1.25" fill="#cfcfcf"/></svg>
<svg style="position:absolute;left:521.0px;top:141.0px" width="48" height="48" viewBox="0 0 48 48"><g fill="#dcd9d6" stroke="#cbc7c3" stroke-width="1.2"><path d="M8,46 L11,32 L24,5 L33,9 L20,36 Z"/><path d="M18,47 L21,33 L34,6 L43,10 L30,37 Z"/></g><path d="M24,5 L33,9 L31.5,12 L22.5,8 Z M34,6 L43,10 L41.5,13 L32.5,9 Z" fill="#f4f4f4" stroke="#cfcfcf" stroke-width="1"/></svg>
<svg style="position:absolute;left:564px;top:184px;" width="17" height="9" viewBox="0 0 17 9"><path d="M0,0.5 H16.5 L8.25,8.5 Z" fill="#5b5b5b"/></svg>
<svg style="position:absolute;left:592.0px;top:141.0px" width="48" height="48" viewBox="0 0 48 48"><path d="M8,45 L11,32 L29,3 L37,8 L19,37 Z" fill="#e3c51a" stroke="#5a4a00" stroke-width="1.4"/><path d="M11,32 L19,37 L8,45 Z" fill="#bbb" stroke="#333" stroke-width="1"/><path d="M8,45 L11,41 L13,43 Z" fill="#111"/><path d="M29,3 L37,8 L35,11 L27,6 Z" fill="#f0f0f0" stroke="#999" stroke-width="1"/></svg>
<svg style="position:absolute;left:656.0px;top:141.0px" width="48" height="48" viewBox="0 0 48 48"><rect x="4" y="4" width="38" height="38" rx="5" fill="#dcdcdc" stroke="#c9c9c9" stroke-width="1.6"/><rect x="12" y="7" width="22" height="14" fill="#f2f2f2" stroke="#cfcfcf" stroke-width="1"/><path d="M15,11 H31 M15,15 H31" stroke="#cfcfcf" stroke-width="1.5"/><rect x="12" y="28" width="20" height="14" fill="#efefef" stroke="#cfcfcf"/><path d="M26,46 L28,36 L38,20 L43,23 L33,39 Z" fill="#dcd5d2" stroke="#c8c0bc" stroke-width="1"/></svg>
<svg style="position:absolute;left:723.0px;top:141.0px" width="48" height="48" viewBox="0 0 48 48"><rect x="4" y="36" width="7" height="7" fill="#e6e6e6" stroke="#cfcfcf" stroke-width="1.6"/><rect x="35" y="5" width="7" height="7" fill="#e6e6e6" stroke="#cfcfcf" stroke-width="1.6"/><path d="M10,37 L36,11" stroke="#dcdcdc" stroke-width="3" stroke-dasharray="5,3"/></svg>
<svg style="position:absolute;left:782px;top:162px;" width="17" height="9" viewBox="0 0 17 9"><path d="M0,0.5 H16.5 L8.25,8.5 Z" fill="#5b5b5b"/></svg>
<svg style="position:absolute;left:814.0px;top:141.0px" width="48" height="48" viewBox="0 0 48 48"><path d="M6,12 C6,2 18,3 26,6 C34,8 42,2 42,14 C42,22 36,20 30,22 C22,24 14,24 10,20 C6,18 6,16 6,12 Z" fill="#dcdedc" stroke="#c6c8c6" stroke-width="1.6"/><rect x="26" y="26" width="20" height="20" rx="3" fill="#cfcdc6"/><g stroke="#fff" stroke-width="2.2" stroke-linecap="round"><path d="M36,29 V43 M30,32.5 L42,39.5 M30,39.5 L42,32.5"/></g><circle cx="36" cy="36" r="2.8" fill="#fff"/></svg>
<svg style="position:absolute;left:881.0px;top:141.0px" width="48" height="48" viewBox="0 0 48 48"><rect x="7" y="3" width="10" height="10" fill="#e8e8e8" stroke="#c6c6c6" stroke-width="1.6"/><path d="M7,3 L17,13 M17,3 L7,13 M17,8 H40 M12,13 L5,41" stroke="#c6c6c6" stroke-width="1.4"/><path d="M22,42 L38,24 M26,20 L38,40" stroke="#d0ccc6" stroke-width="4.5" stroke-linecap="round"/><path d="M20,20 C22,15 30,15 32,20 L28,24 Z" fill="#d8d2cc"/></svg>
<svg style="position:absolute;left:937px;top:162px;" width="17" height="9" viewBox="0 0 17 9"><path d="M0,0.5 H16.5 L8.25,8.5 Z" fill="#5b5b5b"/></svg>
<svg style="position:absolute;left:968.0px;top:141.0px" width="48" height="48" viewBox="0 0 48 48"><rect x="3" y="4" width="35" height="9" fill="#e2e0da" stroke="#cfccc4" stroke-width="1.4"/><rect x="3" y="17" width="35" height="9" fill="#e2e0da" stroke="#cfccc4" stroke-width="1.4"/><rect x="3" y="30" width="35" height="9" fill="#e2e0da" stroke="#cfccc4" stroke-width="1.4"/><path d="M13,45 L16,34 L36,5 L42,9 L22,38 Z" fill="#ddd8d4" stroke="#c6c0bc" stroke-width="1.2"/></svg>
<svg style="position:absolute;left:1035.0px;top:142.0px" width="48" height="48" viewBox="0 0 48 48"><rect x="4" y="3" width="24" height="25" fill="#e6e2de" stroke="#d4d0cc" stroke-width="1.2"/><rect x="8" y="9" width="30" height="4" rx="2" fill="#d9c6c6"/><path d="M10,15 H38 L36,45 H12 Z" fill="#dccaca" stroke="#cbb8b8" stroke-width="1"/><path d="M17,19 V41 M24,19 V41 M31,19 V41" stroke="#f0e6e6" stroke-width="2.5"/></svg>
<svg style="position:absolute;left:1100.0px;top:142.0px" width="48" height="48" viewBox="0 0 48 48"><path d="M2,10 L34,24 M2,24 C14,22 26,20 34,18" stroke="#cfcccc" stroke-width="2.4" fill="none"/><ellipse cx="39" cy="14" rx="6" ry="4.5" fill="none" stroke="#cdb8bc" stroke-width="2.4" transform="rotate(-30 39 14)"/><ellipse cx="38" cy="30" rx="6" ry="4.5" fill="none" stroke="#cdb8bc" stroke-width="2.4" transform="rotate(30 38 30)"/></svg>
<svg style="position:absolute;left:1171.0px;top:142.0px" width="48" height="48" viewBox="0 0 48 48"><path d="M17,3 H31 L37,9 V34 H17 Z" fill="#f4f4f4" stroke="#d4d4d4" stroke-width="1.4"/><path d="M4,11 H20 L26,17 V43 H4 Z" fill="#f4f4f4" stroke="#c8c8c8" stroke-width="1.6"/><path d="M8,23 H22 M8,28 H22 M8,33 H22 M8,38 H22" stroke="#c8c8c8" stroke-width="1.3"/></svg>
<svg style="position:absolute;left:1236.0px;top:142.0px" width="48" height="48" viewBox="0 0 48 48"><rect x="4" y="5" width="31" height="38" fill="#f0f0f0" stroke="#cbc9c6" stroke-width="1.8"/><rect x="11" y="2" width="18" height="7" fill="#e0e0e0" stroke="#cbc9c6" stroke-width="1"/><path d="M9,11 H26 L31,16 V40 H9 Z" fill="#fafafa" stroke="#cbc9c6" stroke-width="1.4"/><path d="M13,22 H27 M13,27 H27 M13,32 H27 M13,37 H27" stroke="#cbc9c6" stroke-width="1.3"/></svg>
<svg style="position:absolute;left:1301.0px;top:143.0px" width="48" height="48" viewBox="0 0 48 48"><path d="M2,16 L16,2 V11 C30,11 40,18 38,32 C36,42 30,44 22,44 V38 C28,38 31,34 30,30 C29,24 22,21 16,21 V30 Z" fill="#dcd6d2" stroke="#cfc8c4" stroke-width="1"/></svg>
<svg style="position:absolute;left:1363.0px;top:143.0px" width="48" height="48" viewBox="0 0 48 48"><path d="M46,16 L32,2 V11 C18,11 8,18 10,32 C12,42 18,44 26,44 V38 C20,38 17,34 18,30 C19,24 26,21 32,21 V30 Z" fill="#dadcda" stroke="#cdd0cd" stroke-width="1"/></svg>
<svg style="position:absolute;left:0;top:0" width="2251" height="400"><circle cx="1438" cy="149.0" r="1.25" fill="#cfcfcf"/><circle cx="1445" cy="149.0" r="1.25" fill="#cfcfcf"/><circle cx="1438" cy="155.4" r="1.25" fill="#cfcfcf"/><circle cx="1445" cy="155.4" r="1.25" fill="#cfcfcf"/><circle cx="1438" cy="161.8" r="1.25" fill="#cfcfcf"/><circle cx="1445" cy="161.8" r="1.25" fill="#cfcfcf"/><circle cx="1438" cy="168.2" r="1.25" fill="#cfcfcf"/><circle cx="1445" cy="168.2" r="1.25" fill="#cfcfcf"/><circle cx="1438" cy="174.6" r="1.25" fill="#cfcfcf"/><circle cx="1445" cy="174.6" r="1.25" fill="#cfcfcf"/><circle cx="1438" cy="181.0" r="1.25" fill="#cfcfcf"/><circle cx="1445" cy="181.0" r="1.25" fill="#cfcfcf"/></svg>
<svg style="position:absolute;left:1459.0px;top:145.0px" width="48" height="48" viewBox="0 0 48 48"><path d="M2,15 L9,5 H44 V25 H9 Z" fill="#fde74c" stroke="#c9a227" stroke-width="1.6"/><text x="11" y="21" font-family="Liberation Sans" font-weight="bold" font-size="14" fill="#222">abc</text></svg>
<svg style="position:absolute;left:1528.0px;top:142.0px" width="48" height="48" viewBox="0 0 48 48"><path d="M18,20 L18,2 A18,18 0 0 1 34,11 Z" fill="#f5d60a" stroke="#111" stroke-width="1.2"/><path d="M18,20 L34,11 A18,18 0 0 1 14,38 Z" fill="#c01a1a" stroke="#111" stroke-width="1.2"/><path d="M18,20 L14,38 A18,18 0 0 1 18,2 Z" fill="#0fa030" stroke="#111" stroke-width="1.2"/><rect x="18" y="34" width="6" height="11" fill="#f5d60a" stroke="#333" stroke-width="1"/><rect x="26" y="18" width="6" height="27" fill="#0fa030" stroke="#333" stroke-width="1"/><rect x="34" y="31" width="7" height="14" fill="#c01a1a" stroke="#333" stroke-width="1"/></svg>
<div style="position:absolute;left:1591px;top:148px;width:2px;height:38px;background:#c8c8c8;"></div>
<svg style="position:absolute;left:1606.0px;top:146.0px" width="48" height="48" viewBox="0 0 48 48"><path d="M2,14 L9,4 H40 V24 H9 Z" fill="#d8e6f8" stroke="#4a8ad8" stroke-width="1.6"/><text x="10" y="20" font-family="Liberation Sans" font-weight="bold" font-size="14" fill="#333">ab</text><path d="M32,28 V16 A2,2 0 0 1 36,16 V28" fill="#fff" stroke="#333" stroke-width="1.2"/><circle cx="34" cy="36" r="9" fill="#b02222"/><circle cx="31" cy="33" r="3" fill="#d85a5a"/></svg>
<svg style="position:absolute;left:1671.0px;top:145.0px" width="48" height="48" viewBox="0 0 48 48"><path d="M2,15 L9,5 H44 V25 H9 Z" fill="#fde8e8" stroke="#e01818" stroke-width="2"/><text x="11" y="21" font-family="Liberation Sans" font-weight="bold" font-size="14" fill="#e01818">abc</text></svg>
<div style="position:absolute;left:1737px;top:148px;width:2px;height:38px;background:#c8c8c8;"></div>
<svg style="position:absolute;left:1754.0px;top:146.0px" width="48" height="48" viewBox="0 0 48 48"><path d="M2,14 L9,4 H40 V24 H9 Z" fill="#e8e6e0" stroke="#cfccc6" stroke-width="1.6"/><text x="10" y="20" font-family="Liberation Sans" font-weight="bold" font-size="14" fill="#c8c6c0">ab</text><path d="M32,28 V16 A2,2 0 0 1 36,16 V28" fill="#fff" stroke="#bbb" stroke-width="1.2"/><circle cx="34" cy="36" r="9" fill="#cdc8c8"/></svg>
<svg style="position:absolute;left:1843px;top:158px;" width="18" height="16" viewBox="0 0 18 16"><path d="M2,3 L7,8 L2,13 M10,3 L15,8 L10,13" fill="none" stroke="#333" stroke-width="2.2"/></svg>
<svg style="position:absolute;left:0;top:0" width="2251" height="400"><circle cx="1878" cy="149.0" r="1.25" fill="#cfcfcf"/><circle cx="1885" cy="149.0" r="1.25" fill="#cfcfcf"/><circle cx="1878" cy="155.4" r="1.25" fill="#cfcfcf"/><circle cx="1885" cy="155.4" r="1.25" fill="#cfcfcf"/><circle cx="1878" cy="161.8" r="1.25" fill="#cfcfcf"/><circle cx="1885" cy="161.8" r="1.25" fill="#cfcfcf"/><circle cx="1878" cy="168.2" r="1.25" fill="#cfcfcf"/><circle cx="1885" cy="168.2" r="1.25" fill="#cfcfcf"/><circle cx="1878" cy="174.6" r="1.25" fill="#cfcfcf"/><circle cx="1885" cy="174.6" r="1.25" fill="#cfcfcf"/><circle cx="1878" cy="181.0" r="1.25" fill="#cfcfcf"/><circle cx="1885" cy="181.0" r="1.25" fill="#cfcfcf"/></svg>
<svg style="position:absolute;left:1902.0px;top:141.0px" width="48" height="48" viewBox="0 0 48 48"><circle cx="24" cy="22" r="20" fill="#5a8fd8" stroke="#3a6ab0" stroke-width="1.4"/><ellipse cx="24" cy="22" rx="8" ry="20" fill="none" stroke="#d0e0f4" stroke-width="2"/><path d="M4,22 H44 M7,12 H41 M7,32 H41" stroke="#d0e0f4" stroke-width="1.8"/><ellipse cx="14" cy="22" rx="6" ry="14" fill="#444" opacity="0.55"/><ellipse cx="34" cy="22" rx="6" ry="14" fill="#444" opacity="0.55"/><rect x="30" y="30" width="17" height="17" rx="3" fill="#5f9c5f"/><path d="M38.5,33 V44 M33,38.5 H44" stroke="#fff" stroke-width="3"/><path d="M41,44 H48 L44.5,48 Z" fill="#222"/></svg>
<svg style="position:absolute;left:1967px;top:158px;" width="18" height="16" viewBox="0 0 18 16"><path d="M2,3 L7,8 L2,13 M10,3 L15,8 L10,13" fill="none" stroke="#333" stroke-width="2.2"/></svg>
<svg style="position:absolute;left:0;top:0" width="2251" height="400"><circle cx="2002" cy="149.0" r="1.25" fill="#cfcfcf"/><circle cx="2009" cy="149.0" r="1.25" fill="#cfcfcf"/><circle cx="2002" cy="155.4" r="1.25" fill="#cfcfcf"/><circle cx="2009" cy="155.4" r="1.25" fill="#cfcfcf"/><circle cx="2002" cy="161.8" r="1.25" fill="#cfcfcf"/><circle cx="2009" cy="161.8" r="1.25" fill="#cfcfcf"/><circle cx="2002" cy="168.2" r="1.25" fill="#cfcfcf"/><circle cx="2009" cy="168.2" r="1.25" fill="#cfcfcf"/><circle cx="2002" cy="174.6" r="1.25" fill="#cfcfcf"/><circle cx="2009" cy="174.6" r="1.25" fill="#cfcfcf"/><circle cx="2002" cy="181.0" r="1.25" fill="#cfcfcf"/><circle cx="2009" cy="181.0" r="1.25" fill="#cfcfcf"/></svg>
<svg style="position:absolute;left:2026.0px;top:141.0px" width="48" height="48" viewBox="0 0 48 48"><path d="M22,3 C12,3 12,8 12,12 V16 H24 V18 H8 C3,18 2,24 2,28 C2,34 4,37 8,37 H12 V31 C12,27 15,25 19,25 H29 C32,25 34,23 34,20 V10 C34,6 30,3 22,3 Z" fill="#3a75b0"/><circle cx="17" cy="8" r="2" fill="#fff"/><path d="M26,45 C36,45 36,40 36,36 V32 H24 V30 H40 C45,30 46,24 46,20 C46,14 44,11 40,11 H36 V17 C36,21 33,23 29,23 H19 C16,23 14,25 14,28 V38 C14,42 18,45 26,45 Z" fill="#f5cf3a"/><circle cx="31" cy="40" r="2" fill="#fff"/><path d="M34,36 L45,41 L34,46" fill="none" stroke="#333" stroke-width="2"/></svg>
<svg style="position:absolute;left:2091px;top:158px;" width="18" height="16" viewBox="0 0 18 16"><path d="M2,3 L7,8 L2,13 M10,3 L15,8 L10,13" fill="none" stroke="#333" stroke-width="2.2"/></svg>
<svg style="position:absolute;left:0;top:0" width="2251" height="400"><circle cx="2126" cy="149.0" r="1.25" fill="#cfcfcf"/><circle cx="2133" cy="149.0" r="1.25" fill="#cfcfcf"/><circle cx="2126" cy="155.4" r="1.25" fill="#cfcfcf"/><circle cx="2133" cy="155.4" r="1.25" fill="#cfcfcf"/><circle cx="2126" cy="161.8" r="1.25" fill="#cfcfcf"/><circle cx="2133" cy="161.8" r="1.25" fill="#cfcfcf"/><circle cx="2126" cy="168.2" r="1.25" fill="#cfcfcf"/><circle cx="2133" cy="168.2" r="1.25" fill="#cfcfcf"/><circle cx="2126" cy="174.6" r="1.25" fill="#cfcfcf"/><circle cx="2133" cy="174.6" r="1.25" fill="#cfcfcf"/><circle cx="2126" cy="181.0" r="1.25" fill="#cfcfcf"/><circle cx="2133" cy="181.0" r="1.25" fill="#cfcfcf"/></svg>
<svg style="position:absolute;left:2151.0px;top:141.0px" width="48" height="48" viewBox="0 0 48 48"><rect x="4" y="3" width="40" height="42" fill="#6c9bd0" stroke="#1f2f44" stroke-width="2"/><rect x="4" y="3" width="9" height="42" fill="#2a3a4e"/><text x="21" y="34" font-family="Liberation Serif" font-size="28" fill="#fff">?</text></svg>
<svg style="position:absolute;left:0;top:0" width="2251" height="400"><circle cx="2222" cy="149.0" r="1.25" fill="#cfcfcf"/><circle cx="2229" cy="149.0" r="1.25" fill="#cfcfcf"/><circle cx="2222" cy="155.4" r="1.25" fill="#cfcfcf"/><circle cx="2229" cy="155.4" r="1.25" fill="#cfcfcf"/><circle cx="2222" cy="161.8" r="1.25" fill="#cfcfcf"/><circle cx="2229" cy="161.8" r="1.25" fill="#cfcfcf"/><circle cx="2222" cy="168.2" r="1.25" fill="#cfcfcf"/><circle cx="2229" cy="168.2" r="1.25" fill="#cfcfcf"/><circle cx="2222" cy="174.6" r="1.25" fill="#cfcfcf"/><circle cx="2229" cy="174.6" r="1.25" fill="#cfcfcf"/><circle cx="2222" cy="181.0" r="1.25" fill="#cfcfcf"/><circle cx="2229" cy="181.0" r="1.25" fill="#cfcfcf"/></svg>
<svg style="position:absolute;left:0;top:0" width="2251" height="400"><circle cx="6" cy="228.0" r="1.25" fill="#cfcfcf"/><circle cx="13" cy="228.0" r="1.25" fill="#cfcfcf"/><circle cx="6" cy="234.4" r="1.25" fill="#cfcfcf"/><circle cx="13" cy="234.4" r="1.25" fill="#cfcfcf"/><circle cx="6" cy="240.8" r="1.25" fill="#cfcfcf"/><circle cx="13" cy="240.8" r="1.25" fill="#cfcfcf"/><circle cx="6" cy="247.2" r="1.25" fill="#cfcfcf"/><circle cx="13" cy="247.2" r="1.25" fill="#cfcfcf"/><circle cx="6" cy="253.6" r="1.25" fill="#cfcfcf"/><circle cx="13" cy="253.6" r="1.25" fill="#cfcfcf"/><circle cx="6" cy="260.0" r="1.25" fill="#cfcfcf"/><circle cx="13" cy="260.0" r="1.25" fill="#cfcfcf"/></svg>
<div style="position:absolute;left:22px;top:214px;width:64px;height:61px;background:#d6d6d6;border:2px solid #aaaaaa;border-radius:7px;"></div>
<svg style="position:absolute;left:30.0px;top:220.0px" width="48" height="48" viewBox="0 0 48 48"><path d="M8,21 L20,33 C24,37 30,37 33,33 C37,29 36,23 32,19 L22,9 L30,3 L40,13 C47,21 48,33 40,40 C32,47 21,46 13,38 L3,28 Z" fill="#d20f0f" stroke="#8a0000" stroke-width="1.2"/><path d="M3,28 L8,21 L15,28 L10,35 Z" fill="#fff" stroke="#8a0000" stroke-width="1"/><path d="M22,9 L30,3 L37,10 L29,16 Z" fill="#fff" stroke="#8a0000" stroke-width="1"/></svg>
<svg style="position:absolute;left:99.0px;top:217.0px" width="48" height="48" viewBox="0 0 48 48"><path d="M8.8,7.4 L19.5,39.7 L29,10.4 H39.8 M8.8,19 L19.5,27.7 L29,22.5 H39.8" stroke="#8bc48b" stroke-width="2.6" fill="none"/><rect x="5.300000000000001" y="3.9000000000000004" width="7" height="7" fill="#d8d8d8" stroke="#777" stroke-width="1.4"/><rect x="5.300000000000001" y="15.5" width="7" height="7" fill="#d8d8d8" stroke="#777" stroke-width="1.4"/><rect x="16.0" y="24.2" width="7" height="7" fill="#d8d8d8" stroke="#777" stroke-width="1.4"/><rect x="16.0" y="36.2" width="7" height="7" fill="#d8d8d8" stroke="#777" stroke-width="1.4"/><rect x="25.5" y="6.9" width="7" height="7" fill="#d8d8d8" stroke="#777" stroke-width="1.4"/><rect x="36.3" y="6.9" width="7" height="7" fill="#d8d8d8" stroke="#777" stroke-width="1.4"/><rect x="25.5" y="19.0" width="7" height="7" fill="#d8d8d8" stroke="#777" stroke-width="1.4"/><rect x="36.3" y="19.0" width="7" height="7" fill="#d8d8d8" stroke="#777" stroke-width="1.4"/></svg>
<svg style="position:absolute;left:137px;top:262px;" width="17" height="9" viewBox="0 0 17 9"><path d="M0,0.5 H16.5 L8.25,8.5 Z" fill="#5b5b5b"/></svg>
<div style="position:absolute;left:154px;top:214px;width:64px;height:61px;background:#d6d6d6;border:2px solid #aaaaaa;border-radius:7px;"></div>
<svg style="position:absolute;left:168px;top:225px;" width="40" height="40" viewBox="0 0 40 40"><rect x="2.5" y="3.5" width="7" height="7" fill="#d0d0d0" stroke="#777" stroke-width="1.4"/><rect x="26.5" y="7.5" width="7" height="7" fill="#d0d0d0" stroke="#777" stroke-width="1.4"/><rect x="14.5" y="27.5" width="7" height="7" fill="#d0d0d0" stroke="#777" stroke-width="1.4"/></svg>
<svg style="position:absolute;left:203px;top:262px;" width="17" height="9" viewBox="0 0 17 9"><path d="M0,0.5 H16.5 L8.25,8.5 Z" fill="#5b5b5b"/></svg>
<div style="position:absolute;left:221px;top:223px;width:194px;height:45px;background:#fff;border:2px solid #b4b4b4;border-radius:6px;"></div>
<div style="position:absolute;left:385px;top:225px;width:2px;height:41px;background:#cfcfcf;"></div>
<div style="position:absolute;left:387px;top:225px;width:26px;height:41px;background:linear-gradient(#fafafa,#ededed);border-radius:0 5px 5px 0;"></div>
<svg style="position:absolute;left:392px;top:232px;" width="17" height="27" viewBox="0 0 17 27"><path d="M0,8 L8.5,0 L17,8 Z M0,18 H17 L8.5,26 Z" fill="#5b5b5b"/></svg>
<svg style="position:absolute;left:337px;top:233px;" width="28" height="22" viewBox="0 0 28 22"><path d="M0,11 L8,1 H27 V21 H8 Z" fill="#a8a8a8"/><path d="M12,5 L22,17 M22,5 L12,17" stroke="#fff" stroke-width="2.6"/></svg>
<div style="position:absolute;left:230.5px;top:232.14px;font-size:27px;line-height:27px;font-weight:400;font-style:normal;color:#1e1e1e;white-space:pre;letter-spacing:-1.523px;">12</div>
<div style="position:absolute;left:419px;top:220px;width:198px;height:47px;background:linear-gradient(#fcfcfc,#ececec);border:2px solid #b4b4b4;border-radius:6px;"></div>
<svg style="position:absolute;left:587px;top:240px;" width="16" height="8" viewBox="0 0 16 8"><path d="M0,0 H16 L8,8 Z" fill="#5b5b5b"/></svg>
<div style="position:absolute;left:429px;top:231.14px;font-size:27px;line-height:27px;font-weight:400;font-style:normal;color:#1e1e1e;white-space:pre;letter-spacing:-0.766px;">px</div>
<svg style="position:absolute;left:629.0px;top:220.0px" width="48" height="48" viewBox="0 0 48 48"><path d="M5,2 L18,21 V45 M18,21 L43,11" stroke="#86c286" stroke-width="3.2" stroke-linecap="round" fill="none"/><rect x="12.5" y="15.5" width="11" height="11" fill="#bcbcbc" stroke="#777" stroke-width="1.6"/></svg>
<svg style="position:absolute;left:694.0px;top:220.0px" width="48" height="48" viewBox="0 0 48 48"><path d="M24,10 C30,1 44,0 45,7 C46,14 40,16 34,20 L26,22 Z" fill="#c2c2c2" stroke="#444" stroke-width="2.2"/><path d="M4,12 C6,2 22,2 28,10 C34,18 32,28 36,36 C38,44 30,48 24,46 C16,44 14,34 8,28 C3,22 3,17 4,12 Z" fill="#8dc88d" stroke="#444" stroke-width="2.4"/><path d="M8,20 C15,20 22,19 30,16" stroke="#444" stroke-width="1.6" stroke-dasharray="3,2" fill="none"/></svg>
<svg style="position:absolute;left:733px;top:259px;" width="17" height="9" viewBox="0 0 17 9"><path d="M0,0.5 H16.5 L8.25,8.5 Z" fill="#5b5b5b"/></svg>
<svg style="position:absolute;left:760.0px;top:220.0px" width="48" height="48" viewBox="0 0 48 48"><path d="M3,3 L43,43 M43,3 L3,43" stroke="#86c286" stroke-width="3.4" stroke-linecap="round"/><circle cx="23" cy="23" r="4.5" fill="#bcbcbc" stroke="#777" stroke-width="1.5"/></svg>
<svg style="position:absolute;left:826.0px;top:220.0px" width="48" height="48" viewBox="0 0 48 48"><path d="M3,43 L43,3" stroke="#86c286" stroke-width="3.4" stroke-linecap="round"/><path d="M6,9 L20,21 L30,16 L40,41 L26,31 L16,35 Z" fill="#f6d000" stroke="#e0a000" stroke-width="1.2" stroke-linejoin="round"/><path d="M6,9 L20,21 L16,35 Z" fill="#f0b400"/></svg>
<svg style="position:absolute;left:885px;top:240px;" width="17" height="9" viewBox="0 0 17 9"><path d="M0,0.5 H16.5 L8.25,8.5 Z" fill="#5b5b5b"/></svg>
<svg style="position:absolute;left:914.0px;top:220.0px" width="48" height="48" viewBox="0 0 48 48"><path d="M8,13 L13,38 M13,38 L4,42 M8,13 L42,31" stroke="#86c286" stroke-width="3" stroke-linecap="round" fill="none"/><circle cx="8" cy="13" r="4.5" fill="#bcbcbc" stroke="#777" stroke-width="1.5"/><circle cx="13" cy="38" r="4.5" fill="#bcbcbc" stroke="#777" stroke-width="1.5"/><path d="M27,6 L32,2 L44,22 L43,29 L38,25 Z" fill="#f2d23a" stroke="#7a6a00" stroke-width="1.2"/></svg>
<svg style="position:absolute;left:0;top:0" width="2251" height="400"><circle cx="6" cy="306.0" r="1.25" fill="#cfcfcf"/><circle cx="13" cy="306.0" r="1.25" fill="#cfcfcf"/><circle cx="6" cy="312.4" r="1.25" fill="#cfcfcf"/><circle cx="13" cy="312.4" r="1.25" fill="#cfcfcf"/><circle cx="6" cy="318.8" r="1.25" fill="#cfcfcf"/><circle cx="13" cy="318.8" r="1.25" fill="#cfcfcf"/><circle cx="6" cy="325.2" r="1.25" fill="#cfcfcf"/><circle cx="13" cy="325.2" r="1.25" fill="#cfcfcf"/><circle cx="6" cy="331.6" r="1.25" fill="#cfcfcf"/><circle cx="13" cy="331.6" r="1.25" fill="#cfcfcf"/><circle cx="6" cy="338.0" r="1.25" fill="#cfcfcf"/><circle cx="13" cy="338.0" r="1.25" fill="#cfcfcf"/></svg>
<svg style="position:absolute;left:30.0px;top:298.0px" width="48" height="48" viewBox="0 0 48 48"><defs><linearGradient id="gs" x1="0" y1="0" x2="1" y2="1"><stop offset="0" stop-color="#5aa040"/><stop offset="1" stop-color="#9ad88a"/></linearGradient></defs><rect x="0" y="0" width="48" height="48" fill="url(#gs)"/><path d="M0,0 H48 V48 Z" fill="#fff" opacity="0.12"/><circle cx="27" cy="20" r="12" fill="none" stroke="#fff" stroke-width="4"/><path d="M18,29 L6,42" stroke="#fff" stroke-width="5" stroke-linecap="round"/></svg>
<svg style="position:absolute;left:95.5px;top:298.0px" width="48" height="48" viewBox="0 0 48 48"><path d="M1,1 H46 V47 H1 Z" fill="#f5d34a"/><path d="M1,1 H8 V47 H1 Z" fill="#a0305a"/><path d="M8,8 L18,12 L14,18 Z" fill="#3aa040"/><path d="M22,1 C30,10 26,20 36,28 C42,34 40,42 46,47 H34 C32,38 24,36 20,28 C16,20 20,10 16,1 Z" fill="#3a6ad0"/><path d="M1,36 C10,34 18,40 26,47 H1 Z" fill="#3a6ad0"/><rect x="12" y="20" width="6" height="8" fill="#3a8a8a"/><path d="M20,32 L44,6" stroke="#6a3a10" stroke-width="6" stroke-linecap="round"/><path d="M20,32 L24,28" stroke="#e8c8a0" stroke-width="6"/><path d="M2,40 L18,34" stroke="#333" stroke-width="1.4" fill="none"/></svg>
<svg style="position:absolute;left:0;top:0" width="2251" height="400"><circle cx="171" cy="306.0" r="1.25" fill="#cfcfcf"/><circle cx="178" cy="306.0" r="1.25" fill="#cfcfcf"/><circle cx="171" cy="312.4" r="1.25" fill="#cfcfcf"/><circle cx="178" cy="312.4" r="1.25" fill="#cfcfcf"/><circle cx="171" cy="318.8" r="1.25" fill="#cfcfcf"/><circle cx="178" cy="318.8" r="1.25" fill="#cfcfcf"/><circle cx="171" cy="325.2" r="1.25" fill="#cfcfcf"/><circle cx="178" cy="325.2" r="1.25" fill="#cfcfcf"/><circle cx="171" cy="331.6" r="1.25" fill="#cfcfcf"/><circle cx="178" cy="331.6" r="1.25" fill="#cfcfcf"/><circle cx="171" cy="338.0" r="1.25" fill="#cfcfcf"/><circle cx="178" cy="338.0" r="1.25" fill="#cfcfcf"/></svg>
<svg style="position:absolute;left:194.0px;top:298.0px" width="48" height="48" viewBox="0 0 48 48"><circle cx="24" cy="24" r="23.5" fill="#06506e"/><rect x="12" y="9" width="24" height="27" rx="5" fill="#fff"/><rect x="15" y="16" width="18" height="9" rx="1" fill="#06506e"/><rect x="18" y="11" width="12" height="2.5" fill="#06506e"/><rect x="13" y="34" width="6" height="6" rx="1.5" fill="#fff"/><rect x="29" y="34" width="6" height="6" rx="1.5" fill="#fff"/><circle cx="17" cy="30" r="2" fill="#06506e"/><circle cx="31" cy="30" r="2" fill="#06506e"/></svg>
<svg style="position:absolute;left:0;top:0" width="2251" height="400"><circle cx="268" cy="306.0" r="1.25" fill="#cfcfcf"/><circle cx="275" cy="306.0" r="1.25" fill="#cfcfcf"/><circle cx="268" cy="312.4" r="1.25" fill="#cfcfcf"/><circle cx="275" cy="312.4" r="1.25" fill="#cfcfcf"/><circle cx="268" cy="318.8" r="1.25" fill="#cfcfcf"/><circle cx="275" cy="318.8" r="1.25" fill="#cfcfcf"/><circle cx="268" cy="325.2" r="1.25" fill="#cfcfcf"/><circle cx="275" cy="325.2" r="1.25" fill="#cfcfcf"/><circle cx="268" cy="331.6" r="1.25" fill="#cfcfcf"/><circle cx="275" cy="331.6" r="1.25" fill="#cfcfcf"/><circle cx="268" cy="338.0" r="1.25" fill="#cfcfcf"/><circle cx="275" cy="338.0" r="1.25" fill="#cfcfcf"/></svg>
<svg style="position:absolute;left:292.0px;top:298.0px" width="48" height="48" viewBox="0 0 48 48"><path d="M9,6 H15 V18 M33,6 H39 V41 M15,18 H33 M20,18 V38 H34 M24,40 V46 H34" fill="none" stroke="#e88" stroke-width="1"/><path d="M33,6 V18 M38,8 V38 M20,38 H38" fill="none" stroke="#6c6" stroke-width="1"/><path d="M9,18 H30 V46 H20" fill="none" stroke="#88e" stroke-width="1"/><text x="1" y="33" font-family="Liberation Sans" font-weight="bold" font-size="21" fill="#465060" textLength="47" lengthAdjust="spacingAndGlyphs">GTFS</text></svg>
<div style="position:absolute;left:5px;top:369.74px;font-size:22.4px;line-height:22.4px;font-weight:400;font-style:normal;color:#1e1e1e;white-space:pre;letter-spacing:0.268px;">Browser</div>
<svg style="position:absolute;left:532px;top:370px;" width="23" height="23" viewBox="0 0 23 23"><rect x="1" y="1" width="20" height="20" rx="3" fill="none" stroke="#777" stroke-width="1.4"/><rect x="5" y="9" width="8" height="8" fill="none" stroke="#666" stroke-width="1.5"/><path d="M9,9 V5 H17 V13 H13" fill="none" stroke="#666" stroke-width="1.5"/></svg>
<svg style="position:absolute;left:560px;top:370px;" width="23" height="23" viewBox="0 0 23 23"><rect x="1" y="1" width="20" height="20" rx="3" fill="none" stroke="#777" stroke-width="1.4"/><path d="M6,6 L16,16 M16,6 L6,16" stroke="#666" stroke-width="3"/></svg>
<svg style="position:absolute;left:12px;top:414px;" width="34" height="36" viewBox="0 0 34 36"><rect x="2" y="3" width="23" height="23" fill="#f0f0ee" stroke="#888" stroke-width="1.8"/><rect x="18" y="19" width="13" height="13" rx="2.5" fill="#5a9a5a"/><path d="M24.5,21.5 V29.5 M20.5,25.5 H28.5" stroke="#fff" stroke-width="2.5"/></svg>
<svg style="position:absolute;left:62px;top:414px;" width="34" height="34" viewBox="0 0 34 34"><path d="M4,15 A13,11 0 0 1 26,8 L29,4 L29,15 L18,15 L22,11 A9,7 0 0 0 9,16 Z" fill="#4a86c8"/><path d="M29,19 A13,11 0 0 1 7,26 L4,30 L4,19 L15,19 L11,23 A9,7 0 0 0 24,18 Z" fill="#3d78c0"/></svg>
<svg style="position:absolute;left:113px;top:414px;" width="32" height="36" viewBox="0 0 32 36"><path d="M2,2 H28 V8 L18,20 V33 L12,28 V20 L2,8 Z" fill="#6c9bd0" stroke="#34588a" stroke-width="1.5"/><rect x="3.5" y="3" width="23" height="5" fill="#fde74c"/></svg>
<svg style="position:absolute;left:162px;top:412px;" width="36" height="36" viewBox="0 0 36 36"><path d="M4,6 H32 M6,6 V33 M6,18 H12 M6,32 H12" stroke="#a8a8a8" stroke-width="1.8" fill="none"/><rect x="10" y="14" width="6" height="6" fill="#f7941d"/><rect x="10" y="28" width="6" height="6" fill="#f7941d"/><path d="M24,3 L33,13 H28 V32 H21 V13 H15 Z" fill="#6c9bd0" stroke="#34588a" stroke-width="1.5"/></svg>
<svg style="position:absolute;left:213px;top:415px;" width="30" height="30" viewBox="0 0 30 30"><circle cx="15" cy="15" r="13" fill="#6c9bd0" stroke="#34588a" stroke-width="1.5"/><path d="M13.5,12.5 h5 l-3.2,11 h-5 Z" fill="#fff"/><circle cx="17.2" cy="8" r="2.4" fill="#fff"/></svg>
<div style="position:absolute;left:0px;top:462px;width:585px;height:415px;background:#fff;border-top:1px solid #bcbcbc;border-right:1px solid #bcbcbc;"></div>
<div style="position:absolute;left:0px;top:716px;width:556px;height:36px;background:#dcdcdc;"></div>
<div style="position:absolute;left:0;top:0;width:2251px;height:1534px;clip-path:inset(463px 1695px 658px 0px)"><svg style="position:absolute;left:70.5px;top:478px;" width="16" height="9" viewBox="0 0 16 9"><path d="M0,0.5 L15.5,0.5 L7.75,8.5 Z" fill="#5b5b5b"/></svg>
<svg style="position:absolute;left:102px;top:468px;" width="28" height="26" viewBox="0 0 28 26"><path d="M1,1 H12 L16,4 H27 V10 H1 Z" fill="#8a8c87"/><path d="M1,25 V7.5 H12 L16,11.5 H27 V25 Z" fill="#ececec" stroke="#7f817c" stroke-width="1.8" stroke-linejoin="round"/></svg>
<div style="position:absolute;left:145px;top:468.91px;font-size:25.5px;line-height:25.5px;font-weight:400;font-style:normal;color:#1e1e1e;white-space:pre;letter-spacing:1.616px;">maps-0fa9fd850eda3d2062e66f2</div>
<svg style="position:absolute;left:106px;top:511px;" width="9" height="14" viewBox="0 0 9 14"><path d="M0.5,0 L8.5,7 L0.5,14 Z" fill="#5b5b5b"/></svg>
<svg style="position:absolute;left:134px;top:505px;" width="28" height="26" viewBox="0 0 28 26"><path d="M1,25 V1.5 H12 L16,5.5 H27 V25 Z" fill="#ececec" stroke="#7f817c" stroke-width="1.8" stroke-linejoin="round"/></svg>
<div style="position:absolute;left:177px;top:504.91px;font-size:25.5px;line-height:25.5px;font-weight:400;font-style:normal;color:#1e1e1e;white-space:pre;letter-spacing:1.078px;">assembly-constituencies</div>
<svg style="position:absolute;left:106px;top:547px;" width="9" height="14" viewBox="0 0 9 14"><path d="M0.5,0 L8.5,7 L0.5,14 Z" fill="#5b5b5b"/></svg>
<svg style="position:absolute;left:134px;top:541px;" width="28" height="26" viewBox="0 0 28 26"><path d="M1,25 V1.5 H12 L16,5.5 H27 V25 Z" fill="#ececec" stroke="#7f817c" stroke-width="1.8" stroke-linejoin="round"/></svg>
<div style="position:absolute;left:177px;top:540.91px;font-size:25.5px;line-height:25.5px;font-weight:400;font-style:normal;color:#1e1e1e;white-space:pre;letter-spacing:1.125px;">Districts</div>
<svg style="position:absolute;left:106px;top:583px;" width="9" height="14" viewBox="0 0 9 14"><path d="M0.5,0 L8.5,7 L0.5,14 Z" fill="#5b5b5b"/></svg>
<svg style="position:absolute;left:134px;top:577px;" width="28" height="26" viewBox="0 0 28 26"><path d="M1,25 V1.5 H12 L16,5.5 H27 V25 Z" fill="#ececec" stroke="#7f817c" stroke-width="1.8" stroke-linejoin="round"/></svg>
<div style="position:absolute;left:177px;top:576.91px;font-size:25.5px;line-height:25.5px;font-weight:400;font-style:normal;color:#1e1e1e;white-space:pre;letter-spacing:0.781px;">docs</div>
<svg style="position:absolute;left:106px;top:619px;" width="9" height="14" viewBox="0 0 9 14"><path d="M0.5,0 L8.5,7 L0.5,14 Z" fill="#5b5b5b"/></svg>
<svg style="position:absolute;left:134px;top:613px;" width="28" height="26" viewBox="0 0 28 26"><path d="M1,25 V1.5 H12 L16,5.5 H27 V25 Z" fill="#ececec" stroke="#7f817c" stroke-width="1.8" stroke-linejoin="round"/></svg>
<div style="position:absolute;left:177px;top:612.91px;font-size:25.5px;line-height:25.5px;font-weight:400;font-style:normal;color:#1e1e1e;white-space:pre;letter-spacing:0.597px;">eci</div>
<svg style="position:absolute;left:106px;top:655px;" width="9" height="14" viewBox="0 0 9 14"><path d="M0.5,0 L8.5,7 L0.5,14 Z" fill="#5b5b5b"/></svg>
<svg style="position:absolute;left:134px;top:649px;" width="28" height="26" viewBox="0 0 28 26"><path d="M1,25 V1.5 H12 L16,5.5 H27 V25 Z" fill="#ececec" stroke="#7f817c" stroke-width="1.8" stroke-linejoin="round"/></svg>
<div style="position:absolute;left:177px;top:648.91px;font-size:25.5px;line-height:25.5px;font-weight:400;font-style:normal;color:#1e1e1e;white-space:pre;letter-spacing:1.029px;">parliamentary-constituencies</div>
<svg style="position:absolute;left:102.5px;top:694px;" width="16" height="9" viewBox="0 0 16 9"><path d="M0,0.5 L15.5,0.5 L7.75,8.5 Z" fill="#5b5b5b"/></svg>
<svg style="position:absolute;left:134px;top:684px;" width="28" height="26" viewBox="0 0 28 26"><path d="M1,1 H12 L16,4 H27 V10 H1 Z" fill="#8a8c87"/><path d="M1,25 V7.5 H12 L16,11.5 H27 V25 Z" fill="#ececec" stroke="#7f817c" stroke-width="1.8" stroke-linejoin="round"/></svg>
<div style="position:absolute;left:177px;top:684.91px;font-size:25.5px;line-height:25.5px;font-weight:400;font-style:normal;color:#1e1e1e;white-space:pre;letter-spacing:0.667px;">States</div>
<svg style="position:absolute;left:138px;top:727px;" width="9" height="14" viewBox="0 0 9 14"><path d="M0.5,0 L8.5,7 L0.5,14 Z" fill="#5b5b5b"/></svg>
<svg style="position:absolute;left:162px;top:719px;" width="30" height="30" viewBox="0 0 30 30"><path d="M3,27 L11.5,4 H27" fill="none" stroke="#8a8a86" stroke-width="1.6"/><circle cx="3" cy="27" r="2.6" fill="#fff" stroke="#8a8a86" stroke-width="1.4"/><circle cx="11.5" cy="4" r="2.6" fill="#fff" stroke="#8a8a86" stroke-width="1.4"/><circle cx="27" cy="4" r="2.6" fill="#fff" stroke="#8a8a86" stroke-width="1.4"/><circle cx="3" cy="7" r="2.6" fill="#fff" stroke="#8a8a86" stroke-width="1.4"/><path d="M12,26 C8,22 12,14 20,11 C27,9 27,17 25,22 C23,27 16,28 12,26 Z" fill="#dcdcda" stroke="#8a8a86" stroke-width="1.5"/></svg>
<div style="position:absolute;left:209px;top:720.91px;font-size:25.5px;line-height:25.5px;font-weight:400;font-style:normal;color:#1e1e1e;white-space:pre;letter-spacing:0.613px;">Admin2.shp</div>
<svg style="position:absolute;left:106px;top:763px;" width="9" height="14" viewBox="0 0 9 14"><path d="M0.5,0 L8.5,7 L0.5,14 Z" fill="#5b5b5b"/></svg>
<svg style="position:absolute;left:134px;top:757px;" width="28" height="26" viewBox="0 0 28 26"><path d="M1,25 V1.5 H12 L16,5.5 H27 V25 Z" fill="#ececec" stroke="#7f817c" stroke-width="1.8" stroke-linejoin="round"/></svg>
<div style="position:absolute;left:177px;top:756.91px;font-size:25.5px;line-height:25.5px;font-weight:400;font-style:normal;color:#1e1e1e;white-space:pre;letter-spacing:1.260px;">Survey-of-India-Index-Maps</div>
<svg style="position:absolute;left:106px;top:799px;" width="9" height="14" viewBox="0 0 9 14"><path d="M0.5,0 L8.5,7 L0.5,14 Z" fill="#5b5b5b"/></svg>
<svg style="position:absolute;left:134px;top:793px;" width="28" height="26" viewBox="0 0 28 26"><path d="M1,25 V1.5 H12 L16,5.5 H27 V25 Z" fill="#ececec" stroke="#7f817c" stroke-width="1.8" stroke-linejoin="round"/></svg>
<div style="position:absolute;left:177px;top:792.91px;font-size:25.5px;line-height:25.5px;font-weight:400;font-style:normal;color:#1e1e1e;white-space:pre;letter-spacing:0.847px;">website</div>
<svg style="position:absolute;left:74px;top:835px;" width="9" height="14" viewBox="0 0 9 14"><path d="M0.5,0 L8.5,7 L0.5,14 Z" fill="#5b5b5b"/></svg>
<svg style="position:absolute;left:102px;top:829px;" width="28" height="26" viewBox="0 0 28 26"><path d="M1,25 V1.5 H12 L16,5.5 H27 V25 Z" fill="#ececec" stroke="#7f817c" stroke-width="1.8" stroke-linejoin="round"/></svg>
<div style="position:absolute;left:145px;top:828.91px;font-size:25.5px;line-height:25.5px;font-weight:400;font-style:normal;color:#1e1e1e;white-space:pre;letter-spacing:0.679px;">packages</div>
<svg style="position:absolute;left:74px;top:871px;" width="9" height="14" viewBox="0 0 9 14"><path d="M0.5,0 L8.5,7 L0.5,14 Z" fill="#5b5b5b"/></svg>
<svg style="position:absolute;left:102px;top:865px;" width="28" height="26" viewBox="0 0 28 26"><path d="M1,25 V1.5 H12 L16,5.5 H27 V25 Z" fill="#ececec" stroke="#7f817c" stroke-width="1.8" stroke-linejoin="round"/></svg>
<div style="position:absolute;left:145px;top:864.91px;font-size:25.5px;line-height:25.5px;font-weight:400;font-style:normal;color:#1e1e1e;white-space:pre;letter-spacing:-0.145px;">PROJECT</div>
</div>
<div style="position:absolute;left:556px;top:463px;width:29px;height:413px;background:#ececec;border-left:1px solid #d4d4d4;"></div>
<div style="position:absolute;left:557px;top:464px;width:27px;height:26px;background:linear-gradient(90deg,#fdfdfd,#efefef);"></div>
<svg style="position:absolute;left:563px;top:470px;" width="16" height="10" viewBox="0 0 16 10"><path d="M0,9 L8,1 L16,9 Z" fill="#5b5b5b"/></svg>
<div style="position:absolute;left:557px;top:490px;width:27px;height:2px;background:#bdbdbd;"></div>
<div style="position:absolute;left:557px;top:490px;width:27px;height:46px;background:#e2e2e2;border:1px solid #d0d0d0;"></div>
<div style="position:absolute;left:557px;top:535px;width:27px;height:1.5px;background:#bdbdbd;"></div>
<div style="position:absolute;left:557px;top:536.5px;width:27px;height:53px;background:linear-gradient(90deg,#fdfdfd,#f1f1f1);"></div>
<div style="position:absolute;left:557px;top:589.5px;width:27px;height:1.5px;background:#bdbdbd;"></div>
<div style="position:absolute;left:557px;top:591px;width:27px;height:256px;background:#e3e3e3;border-left:1px solid #d4d4d4;border-right:1px solid #d4d4d4;"></div>
<div style="position:absolute;left:557px;top:847px;width:27px;height:2px;background:#bdbdbd;"></div>
<div style="position:absolute;left:557px;top:849px;width:27px;height:27px;background:linear-gradient(90deg,#fdfdfd,#efefef);"></div>
<svg style="position:absolute;left:562px;top:858px;" width="16" height="10" viewBox="0 0 16 10"><path d="M0,1 L16,1 L8,9 Z" fill="#5b5b5b"/></svg>
<div style="position:absolute;left:0px;top:876px;width:585px;height:29px;background:#ececec;border-top:1px solid #c6c6c6;border-bottom:1px solid #c6c6c6;border-right:1px solid #c6c6c6;"></div>
<div style="position:absolute;left:0px;top:877px;width:24px;height:27px;background:linear-gradient(#fdfdfd,#eeeeee);"></div>
<svg style="position:absolute;left:5px;top:883px;" width="10" height="16" viewBox="0 0 10 16"><path d="M9,0 L1,8 L9,16 Z" fill="#5b5b5b"/></svg>
<div style="position:absolute;left:24px;top:877px;width:1px;height:27px;background:#c8c8c8;"></div>
<div style="position:absolute;left:25px;top:877px;width:155px;height:27px;background:linear-gradient(#fbfbfb,#f0f0f0);"></div>
<div style="position:absolute;left:180px;top:877px;width:348px;height:27px;background:#e1e1e1;border-left:1px solid #cdcdcd;border-right:1px solid #cdcdcd;"></div>
<div style="position:absolute;left:528px;top:877px;width:28px;height:27px;background:linear-gradient(#fdfdfd,#eeeeee);"></div>
<svg style="position:absolute;left:537px;top:883px;" width="10" height="16" viewBox="0 0 10 16"><path d="M1,0 L9,8 L1,16 Z" fill="#5b5b5b"/></svg>
<div style="position:absolute;left:556px;top:877px;width:28px;height:27px;background:#ececec;border-left:1px solid #c8c8c8;"></div>
<svg style="position:absolute;left:276px;top:908px;" width="40" height="6" viewBox="0 0 40 6"><circle cx="3" cy="3" r="1.1" fill="#b5b5b5"/><circle cx="9" cy="3" r="1.1" fill="#b5b5b5"/><circle cx="15" cy="3" r="1.1" fill="#b5b5b5"/><circle cx="21" cy="3" r="1.1" fill="#b5b5b5"/><circle cx="27" cy="3" r="1.1" fill="#b5b5b5"/><circle cx="33" cy="3" r="1.1" fill="#b5b5b5"/></svg>
<svg style="position:absolute;left:589px;top:900px;" width="6" height="45" viewBox="0 0 6 45"><circle cx="3" cy="3" r="1.1" fill="#b5b5b5"/><circle cx="3" cy="9" r="1.1" fill="#b5b5b5"/><circle cx="3" cy="15" r="1.1" fill="#b5b5b5"/><circle cx="3" cy="21" r="1.1" fill="#b5b5b5"/><circle cx="3" cy="27" r="1.1" fill="#b5b5b5"/><circle cx="3" cy="33" r="1.1" fill="#b5b5b5"/><circle cx="3" cy="39" r="1.1" fill="#b5b5b5"/></svg>
<div style="position:absolute;left:5px;top:925.74px;font-size:22.4px;line-height:22.4px;font-weight:400;font-style:normal;color:#1e1e1e;white-space:pre;letter-spacing:-0.036px;">Layers</div>
<svg style="position:absolute;left:532px;top:926px;" width="23" height="23" viewBox="0 0 23 23"><rect x="1" y="1" width="20" height="20" rx="3" fill="none" stroke="#777" stroke-width="1.4"/><rect x="5" y="9" width="8" height="8" fill="none" stroke="#666" stroke-width="1.5"/><path d="M9,9 V5 H17 V13 H13" fill="none" stroke="#666" stroke-width="1.5"/></svg>
<svg style="position:absolute;left:560px;top:926px;" width="23" height="23" viewBox="0 0 23 23"><rect x="1" y="1" width="20" height="20" rx="3" fill="none" stroke="#777" stroke-width="1.4"/><path d="M6,6 L16,16 M16,6 L6,16" stroke="#666" stroke-width="3"/></svg>
<div style="position:absolute;left:4px;top:964px;width:49px;height:47px;background:#d9d9d9;border:2px solid #a9a9a9;border-radius:6px;"></div>
<svg style="position:absolute;left:12px;top:972px;" width="34" height="32" viewBox="0 0 34 32"><path d="M2,21 L7,8 L21,13 L15,27 Z" fill="#e83838"/><path d="M4.5,15 L7,8 L21,13 L18.5,19.5 Z" fill="#7aa7d8"/><path d="M6,11 L7,8 L21,13 L20,16 Z" fill="#f4e04a"/><path d="M11,21 L18,14 L25,21 L18,28 Z" fill="#e0b070" stroke="#a8742a" stroke-width="1"/><path d="M13,21 L18,26 M15,19 L20,24 M17,17 L22,22 M14,24 L21,17 M12,22 L19,15" stroke="#b88440" stroke-width="0.6"/><path d="M21,16 L30,6" stroke="#a8742a" stroke-width="4" stroke-linecap="round"/><path d="M21,16 L30,6" stroke="#e0a040" stroke-width="2.4" stroke-linecap="round"/></svg>
<svg style="position:absolute;left:60px;top:968px;" width="36" height="38" viewBox="0 0 36 38"><path d="M5,34 V27 M5,34 H14" stroke="#8f8f8f" stroke-width="2" fill="none"/><rect x="9" y="10" width="18" height="20" fill="none" stroke="#8f8f8f" stroke-width="2"/><rect x="13" y="14" width="10" height="13" fill="none" stroke="#8f8f8f" stroke-width="1.5"/><path d="M16,22 V4 A3,3 0 0 1 22,4 V20" fill="none" stroke="#2d4f7c" stroke-width="1.8"/><rect x="21" y="22" width="13" height="13" rx="2.5" fill="#5a9a5a"/><path d="M27.5,24.5 V32.5 M23.5,28.5 H31.5" stroke="#fff" stroke-width="2.5"/></svg>
<svg style="position:absolute;left:110px;top:975px;" width="40" height="34" viewBox="0 0 40 34"><path d="M3,11 C10,2 26,2 34,13 C26,22 10,22 3,11 Z" fill="#fff" stroke="#909090" stroke-width="1.6"/><path d="M6,5 C14,-1 26,1 30,6" fill="none" stroke="#909090" stroke-width="1.4"/><circle cx="18" cy="11" r="7.5" fill="#5a8ed0" stroke="#34588a" stroke-width="1"/><circle cx="18" cy="11" r="3" fill="#111"/><circle cx="16.5" cy="9.5" r="1.2" fill="#fff"/><path d="M28,28 H38 L33,33 Z" fill="#5b5b5b"/></svg>
<svg style="position:absolute;left:162px;top:970px;" width="40" height="38" viewBox="0 0 40 38"><path d="M3,3 H29 V9 L19,20 V33 L13,28 V20 L3,9 Z" fill="#6c9bd0" stroke="#34588a" stroke-width="1.5"/><rect x="4.5" y="4" width="23" height="5" fill="#fde74c"/><path d="M27,27 H37 L32,32 Z" fill="#5b5b5b"/></svg>
<svg style="position:absolute;left:212px;top:968px;" width="64" height="40" viewBox="0 0 64 40"><path d="M18,8 C14,4 7,5 7,10 C7,13 9,15 12,15 C8,15 5,17 5,21 C5,26 12,27 18,23" fill="none" stroke="#5b2a7a" stroke-width="3" stroke-linecap="round"/><path d="M17,33 V24 A4,4 0 0 1 21,20 H28 A4,4 0 0 1 32,24 V33 H28 V27 A2,2 0 0 0 26,25 H23 A2,2 0 0 0 21,27 V33 Z" fill="#9a9a9a"/><path d="M44,14 H60 L52,21 Z" fill="#5b5b5b"/></svg>
<svg style="position:absolute;left:284px;top:970px;" width="38" height="38" viewBox="0 0 38 38"><path d="M4,6 H32 M6,6 V33 M6,18 H12 M6,32 H12" stroke="#a8a8a8" stroke-width="1.8" fill="none"/><rect x="10" y="14" width="6" height="6" fill="#f7941d"/><rect x="10" y="28" width="6" height="6" fill="#f7941d"/><path d="M24,34 L33,24 H28 V5 H21 V24 H15 Z" fill="#6c9bd0" stroke="#34588a" stroke-width="1.5"/></svg>
<svg style="position:absolute;left:335px;top:970px;" width="38" height="38" viewBox="0 0 38 38"><path d="M4,6 H32 M6,6 V33 M6,18 H12 M6,32 H12" stroke="#a8a8a8" stroke-width="1.8" fill="none"/><rect x="10" y="14" width="6" height="6" fill="#f7941d"/><rect x="10" y="28" width="6" height="6" fill="#f7941d"/><path d="M24,3 L33,13 H28 V32 H21 V13 H15 Z" fill="#6c9bd0" stroke="#34588a" stroke-width="1.5"/></svg>
<svg style="position:absolute;left:386px;top:970px;" width="34" height="36" viewBox="0 0 34 36"><rect x="3" y="3" width="23" height="23" fill="none" stroke="#8f8f8f" stroke-width="2"/><rect x="17" y="21" width="15" height="11" rx="3" fill="#e23a3a"/><path d="M20,26.5 H29" stroke="#fff" stroke-width="2.5"/></svg>
<div style="position:absolute;left:0px;top:1018px;width:585px;height:459px;background:#fff;border-top:1px solid #bcbcbc;border-right:1px solid #bcbcbc;border-bottom:1px solid #bcbcbc;"></div>
<div style="position:absolute;left:0px;top:1056px;width:584px;height:36px;background:#dcdcdc;"></div>
<div style="position:absolute;left:44px;top:1024px;width:28px;height:28px;background:#fff;border:2px solid #b4b4b4;border-radius:2px;"></div>
<div style="position:absolute;left:84px;top:1022px;width:32px;height:32px;background:#bfd051;border:1px solid rgba(60,60,30,0.45);"></div>
<div style="position:absolute;left:129px;top:1024.99px;font-size:26px;line-height:26px;font-weight:700;font-style:italic;color:#808080;white-space:pre;letter-spacing:0.730px;">Valid output</div>
<div style="position:absolute;left:541px;top:1021px;width:35px;height:34px;background:#fff;border:1px solid #e0e0e0;border-radius:4px;"></div>
<svg style="position:absolute;left:546px;top:1026px;" width="26" height="24" viewBox="0 0 26 24"><rect x="2" y="6" width="22" height="12" rx="2.5" fill="none" stroke="#6a6a6a" stroke-width="2"/><path d="M6,1 V6 M10.5,1 V6 M15,1 V6 M19.5,1 V6 M6,18 V23 M10.5,18 V23 M15,18 V23 M19.5,18 V23" stroke="#6a6a6a" stroke-width="1.6"/></svg>
<div style="position:absolute;left:44px;top:1060px;width:28px;height:28px;background:#fff;border:2px solid #b4b4b4;border-radius:2px;"></div>
<svg style="position:absolute;left:49px;top:1064px;" width="19" height="20" viewBox="0 0 19 20"><path d="M2,10 L7,17 L17,2" fill="none" stroke="#1e1e1e" stroke-width="3" stroke-linejoin="miter"/></svg>
<div style="position:absolute;left:84px;top:1058px;width:32px;height:32px;background:#bfd051;border:1px solid rgba(60,60,30,0.45);"></div>
<div style="position:absolute;left:129px;top:1060.99px;font-size:26px;line-height:26px;font-weight:700;font-style:normal;color:#000;white-space:pre;letter-spacing:0.109px;text-decoration:underline;text-decoration-thickness:3px;text-underline-offset:3px;">Colored</div>
<div style="position:absolute;left:541px;top:1057px;width:35px;height:34px;background:#fff;border:1px solid #e0e0e0;border-radius:4px;"></div>
<svg style="position:absolute;left:546px;top:1062px;" width="26" height="24" viewBox="0 0 26 24"><rect x="2" y="6" width="22" height="12" rx="2.5" fill="none" stroke="#6a6a6a" stroke-width="2"/><path d="M6,1 V6 M10.5,1 V6 M15,1 V6 M19.5,1 V6 M6,18 V23 M10.5,18 V23 M15,18 V23 M19.5,18 V23" stroke="#6a6a6a" stroke-width="1.6"/></svg>
<div style="position:absolute;left:44px;top:1096px;width:28px;height:28px;background:#fff;border:2px solid #b4b4b4;border-radius:2px;"></div>
<svg style="position:absolute;left:49px;top:1100px;" width="19" height="20" viewBox="0 0 19 20"><path d="M2,10 L7,17 L17,2" fill="none" stroke="#1e1e1e" stroke-width="3" stroke-linejoin="miter"/></svg>
<div style="position:absolute;left:84px;top:1094px;width:32px;height:32px;background:#ff7f13;border:1px solid rgba(60,60,30,0.45);"></div>
<div style="position:absolute;left:129px;top:1096.99px;font-size:26px;line-height:26px;font-weight:700;font-style:normal;color:#1e1e1e;white-space:pre;letter-spacing:0.415px;">Fixed geometries</div>
<div style="position:absolute;left:541px;top:1093px;width:35px;height:34px;background:#fff;border:1px solid #e0e0e0;border-radius:4px;"></div>
<svg style="position:absolute;left:546px;top:1098px;" width="26" height="24" viewBox="0 0 26 24"><rect x="2" y="6" width="22" height="12" rx="2.5" fill="none" stroke="#6a6a6a" stroke-width="2"/><path d="M6,1 V6 M10.5,1 V6 M15,1 V6 M19.5,1 V6 M6,18 V23 M10.5,18 V23 M15,18 V23 M19.5,18 V23" stroke="#6a6a6a" stroke-width="1.6"/></svg>
<div style="position:absolute;left:44px;top:1132px;width:28px;height:28px;background:#fff;border:2px solid #b4b4b4;border-radius:2px;"></div>
<div style="position:absolute;left:84px;top:1130px;width:32px;height:32px;background:#e3b73a;border:1px solid rgba(60,60,30,0.45);"></div>
<div style="position:absolute;left:129px;top:1132.99px;font-size:26px;line-height:26px;font-weight:700;font-style:italic;color:#808080;white-space:pre;letter-spacing:0.527px;">Invalid output</div>
<div style="position:absolute;left:541px;top:1129px;width:35px;height:34px;background:#fff;border:1px solid #e0e0e0;border-radius:4px;"></div>
<svg style="position:absolute;left:546px;top:1134px;" width="26" height="24" viewBox="0 0 26 24"><rect x="2" y="6" width="22" height="12" rx="2.5" fill="none" stroke="#6a6a6a" stroke-width="2"/><path d="M6,1 V6 M10.5,1 V6 M15,1 V6 M19.5,1 V6 M6,18 V23 M10.5,18 V23 M15,18 V23 M19.5,18 V23" stroke="#6a6a6a" stroke-width="1.6"/></svg>
<div style="position:absolute;left:44px;top:1168px;width:28px;height:28px;background:#fff;border:2px solid #b4b4b4;border-radius:2px;"></div>
<svg style="position:absolute;left:49px;top:1172px;" width="19" height="20" viewBox="0 0 19 20"><path d="M2,10 L7,17 L17,2" fill="none" stroke="#1e1e1e" stroke-width="3" stroke-linejoin="miter"/></svg>
<svg style="position:absolute;left:96px;top:1178px;" width="8" height="8" viewBox="0 0 8 8"><circle cx="4" cy="4" r="3" fill="#8e5e9a"/></svg>
<div style="position:absolute;left:129px;top:1168.99px;font-size:26px;line-height:26px;font-weight:700;font-style:normal;color:#1e1e1e;white-space:pre;letter-spacing:0.312px;">Error output</div>
<div style="position:absolute;left:541px;top:1165px;width:35px;height:34px;background:#fff;border:1px solid #e0e0e0;border-radius:4px;"></div>
<svg style="position:absolute;left:546px;top:1170px;" width="26" height="24" viewBox="0 0 26 24"><rect x="2" y="6" width="22" height="12" rx="2.5" fill="none" stroke="#6a6a6a" stroke-width="2"/><path d="M6,1 V6 M10.5,1 V6 M15,1 V6 M19.5,1 V6 M6,18 V23 M10.5,18 V23 M15,18 V23 M19.5,18 V23" stroke="#6a6a6a" stroke-width="1.6"/></svg>
<div style="position:absolute;left:44px;top:1204px;width:28px;height:28px;background:#fff;border:2px solid #b4b4b4;border-radius:2px;"></div>
<div style="position:absolute;left:84px;top:1202px;width:32px;height:32px;background:#e6714e;border:1px solid rgba(60,60,30,0.45);"></div>
<div style="position:absolute;left:129px;top:1204.99px;font-size:26px;line-height:26px;font-weight:700;font-style:italic;color:#808080;white-space:pre;letter-spacing:0.324px;">Colored</div>
<div style="position:absolute;left:541px;top:1201px;width:35px;height:34px;background:#fff;border:1px solid #e0e0e0;border-radius:4px;"></div>
<svg style="position:absolute;left:546px;top:1206px;" width="26" height="24" viewBox="0 0 26 24"><rect x="2" y="6" width="22" height="12" rx="2.5" fill="none" stroke="#6a6a6a" stroke-width="2"/><path d="M6,1 V6 M10.5,1 V6 M15,1 V6 M19.5,1 V6 M6,18 V23 M10.5,18 V23 M15,18 V23 M19.5,18 V23" stroke="#6a6a6a" stroke-width="1.6"/></svg>
<div style="position:absolute;left:44px;top:1240px;width:28px;height:28px;background:#fff;border:2px solid #b4b4b4;border-radius:2px;"></div>
<svg style="position:absolute;left:49px;top:1244px;" width="19" height="20" viewBox="0 0 19 20"><path d="M2,10 L7,17 L17,2" fill="none" stroke="#1e1e1e" stroke-width="3" stroke-linejoin="miter"/></svg>
<div style="position:absolute;left:84px;top:1238px;width:32px;height:32px;background:#ff7f13;border:1px solid rgba(60,60,30,0.45);"></div>
<div style="position:absolute;left:129px;top:1240.99px;font-size:26px;line-height:26px;font-weight:700;font-style:normal;color:#1e1e1e;white-space:pre;letter-spacing:0.309px;">Admin2</div>
<svg style="position:absolute;left:-15px;top:945px;" width="100" height="90" viewBox="0 0 100 90"><ellipse cx="46" cy="43" rx="40.5" ry="34" fill="none" stroke="#ff2200" stroke-width="6.5"/></svg>
<div style="position:absolute;left:598px;top:362px;width:917px;height:1115px;background:#fff;border:1px solid #adadad;"></div>
<svg style="position:absolute;left:0;top:0" width="2251" height="1534"><polygon points="751.0,496.4 752.7,492.2 767.1,480.3 785.8,477.8 786.6,473.6 795.9,473.6 814.6,468.5 821.4,471.9 834.1,468.5 841.7,479.5 850.2,484.6 865.4,489.7 875.6,496.4 879.0,504.0 892.5,509.2 898.5,514.2 912.9,515.1 926.4,505.8 941.7,503.2 951.9,500.7 962.0,504.0 973.0,504.9 983.2,513.4 979.0,534.6 967.1,543.0 960.3,548.1 958.6,556.6 941.7,560.0 945.9,570.2 941.7,578.6 956.1,582.0 955.3,590.5 962.0,597.3 943.4,608.3 938.3,602.4 926.4,604.1 936.6,621.0 938.3,631.2 942.5,644.7 947.6,637.1 957.0,648.1 970.2,650.2 980.3,656.9 982.0,662.0 990.5,664.6 1004.1,672.2 987.1,685.8 982.0,695.9 976.9,711.2 973.6,716.3 988.8,718.0 1010.8,729.8 1027.8,741.7 1046.4,746.8 1054.9,750.2 1073.6,756.9 1088.8,755.3 1097.3,752.7 1112.5,758.6 1114.2,767.1 1129.5,775.6 1143.0,773.9 1146.4,780.7 1163.4,780.7 1175.3,784.9 1183.7,782.4 1190.5,785.8 1210.2,784.2 1215.0,782.0 1216.1,771.5 1211.9,764.7 1213.6,754.6 1215.3,741.0 1230.5,735.1 1237.3,739.3 1237.3,758.0 1235.6,763.0 1240.7,768.1 1250.8,773.2 1266.1,776.6 1283.0,772.4 1294.9,774.9 1332.2,771.5 1333.9,756.3 1320.3,752.9 1318.6,744.4 1332.2,742.7 1350.8,734.2 1369.5,720.7 1388.1,716.4 1396.6,705.4 1410.2,699.5 1415.3,703.7 1433.9,706.3 1450.8,696.1 1461.0,701.2 1454.2,708.8 1464.4,708.0 1467.8,717.3 1461.0,725.8 1489.8,730.8 1490.7,741.0 1478.0,752.9 1483.9,765.6 1476.3,761.4 1469.5,758.0 1449.2,763.0 1427.1,776.6 1423.7,800.3 1413.6,813.9 1411.9,827.5 1396.6,859.7 1374.6,856.3 1372.9,866.4 1372.9,883.4 1366.1,890.2 1366.1,907.1 1359.3,917.3 1349.2,917.3 1345.8,895.3 1340.7,871.5 1339.0,868.1 1330.5,867.3 1325.4,881.7 1316.9,888.5 1311.9,883.4 1306.8,866.4 1311.9,856.3 1332.2,844.4 1338.1,842.7 1339.0,830.8 1344.1,829.2 1339.0,825.8 1323.7,824.1 1300.0,822.6 1284.1,823.9 1268.4,820.0 1265.2,817.4 1265.8,805.6 1265.8,797.8 1261.9,792.0 1260.0,793.2 1258.7,799.1 1252.2,798.5 1245.6,792.6 1243.0,790.6 1235.2,790.6 1231.3,788.0 1227.4,785.4 1218.9,793.2 1216.3,795.2 1215.0,803.0 1218.9,804.3 1227.4,811.5 1235.9,812.8 1240.4,819.3 1239.1,823.2 1225.4,822.6 1220.9,831.1 1216.9,829.8 1213.0,836.9 1215.0,842.1 1223.5,846.7 1232.6,848.7 1234.6,860.0 1230.5,866.4 1233.9,878.3 1240.7,881.7 1239.8,898.6 1243.6,913.2 1243.6,926.9 1222.1,930.9 1212.3,928.9 1212.3,923.0 1194.7,928.9 1183.0,932.8 1177.1,942.6 1181.0,952.4 1177.1,962.1 1165.4,975.8 1155.6,980.7 1132.1,989.5 1116.5,1003.2 1096.9,1024.7 1087.1,1031.6 1069.5,1048.2 1050.0,1059.9 1044.1,1067.8 1042.1,1078.5 1024.5,1086.3 1010.9,1087.3 1001.1,1103.9 997.2,1101.0 985.4,1103.0 979.6,1108.8 975.6,1122.5 978.6,1140.1 981.4,1157.0 983.9,1175.6 981.4,1192.5 971.2,1211.2 969.5,1219.7 967.8,1228.1 969.5,1250.2 969.5,1265.4 952.5,1267.1 949.2,1275.6 940.7,1289.2 942.4,1292.5 958.5,1301.0 954.2,1295.1 940.7,1296.8 922.0,1302.7 918.6,1309.5 915.3,1323.0 898.3,1332.4 888.1,1326.4 871.2,1307.8 864.4,1290.8 857.6,1262.0 849.2,1240.0 840.7,1223.0 828.8,1211.2 818.6,1189.2 815.3,1165.4 805.1,1140.0 798.3,1129.8 789.8,1112.9 779.7,1095.9 774.6,1079.0 772.9,1058.6 764.4,1029.8 759.3,1007.8 755.1,980.7 755.9,979.0 757.6,968.8 761.3,960.0 754.3,941.7 751.2,922.2 751.9,912.8 762.1,909.6 747.2,907.3 743.3,916.7 744.1,930.0 737.8,941.7 724.5,947.2 708.9,954.2 699.5,955.8 685.4,948.0 665.1,928.4 651.8,918.2 644.0,908.9 647.9,903.4 651.8,908.9 655.7,901.8 662.0,904.9 674.5,899.5 681.5,899.5 689.3,886.2 682.3,888.5 669.8,891.6 665.1,894.8 652.6,893.2 636.1,884.6 627.5,874.4 622.8,869.0 622.0,861.9 628.3,858.8 637.7,858.0 639.3,848.6 663.5,849.0 669.8,852.5 676.8,851.7 690.1,845.5 694.0,851.0 701.1,850.2 706.5,845.5 706.6,833.9 698.1,818.6 694.7,808.5 684.6,806.8 677.8,798.3 679.5,783.0 671.0,780.5 660.0,772.9 664.2,761.0 677.8,745.8 686.3,738.1 694.7,739.0 701.5,745.8 728.6,740.7 732.0,736.4 740.5,727.1 745.6,716.1 762.5,706.8 767.6,700.0 770.5,699.0 777.3,680.3 792.5,674.4 791.7,665.9 797.6,663.4 806.1,654.9 814.6,646.4 811.2,639.7 809.5,629.5 811.2,622.7 821.4,617.6 833.2,614.2 836.6,610.0 828.1,607.5 815.4,604.1 809.5,597.3 789.2,590.5 782.4,583.7 780.7,568.5 777.3,543.9 783.2,543.0 785.8,538.0 794.2,534.6 797.6,527.8 786.6,522.7 787.5,515.1 772.2,510.8 767.1,504.9 751.9,503.2" fill="#bed150" stroke="#1f1f1f" stroke-width="2" stroke-linejoin="round"/><polyline points="836.6,610 851,604.1 850.2,593.9 858.6,588.8 879,583.7 880.7,586.3 894.2,593.9 905.3,591.4 914.6,600.7 923.9,598.1 926.4,604.1" fill="none" stroke="#1f1f1f" stroke-width="1.6" stroke-linejoin="round"/><polyline points="850.2,605.8 843.4,614.2 851.9,622.7 860.3,638 872.2,643 875.6,649.8 882.4,654.1 889.2,661.7 901,666.8" fill="none" stroke="#1f1f1f" stroke-width="1.6" stroke-linejoin="round"/><polyline points="791.7,679.5 811.2,681.2 818,680.3 828.1,683.7 832.4,692.2 836.6,685.4 855.3,686.3 862,677 872.2,674.4 875.6,668.5 882.4,665.9 880.7,656.6 877.3,653.2" fill="none" stroke="#1f1f1f" stroke-width="1.6" stroke-linejoin="round"/><polyline points="901,666.8 907.8,663.4 906.1,648.1 914.6,642.2 926.4,641.4 941.7,644.7" fill="none" stroke="#1f1f1f" stroke-width="1.6" stroke-linejoin="round"/><polyline points="902.7,667.6 906.1,677 907.8,687.1 914.6,690.5 926.4,687.1 936.6,699 948.5,705.8 960.3,710.8 975.6,716" fill="none" stroke="#1f1f1f" stroke-width="1.6" stroke-linejoin="round"/><polyline points="902.7,667.6 892.5,680.3 887.5,693.9 889.2,707.5 892.5,720" fill="none" stroke="#1f1f1f" stroke-width="1.6" stroke-linejoin="round"/><polyline points="811.9,681.2 815.1,697.5 841.2,710.5 854.2,733.4 857.5,743.1 877,733.4 883.6,746.4 896.6,743.1" fill="none" stroke="#1f1f1f" stroke-width="1.6" stroke-linejoin="round"/><polyline points="880,716 886,713 893,722 890,729 882,727 880,716" fill="none" stroke="#1f1f1f" stroke-width="1.6" stroke-linejoin="round"/><polyline points="706.6,838.1 737.1,837.3 765.9,844.9 776.1,854.2 781.2,867.8 801.5,881.4 806.6,886.4" fill="none" stroke="#1f1f1f" stroke-width="1.6" stroke-linejoin="round"/><polyline points="806.6,886.4 806.6,894.9 796.4,903.4 798.1,918.6 789.7,923.7 793.1,930.5 803.2,932.2 786.3,942.4 791.4,951 788.1,956.9 778,956.9 774.6,968.8 767.8,972.2 762.7,968.8 757.6,973.9 755.9,979" fill="none" stroke="#1f1f1f" stroke-width="1.6" stroke-linejoin="round"/><polyline points="806.6,917 821.9,927.1 840,935.3 856.9,936.9 863.7,944.6 875.6,936.9 882.4,926.8 897.6,925.1 901,935.3 924.7,930.2 936.6,931.9 951.9,926.8 977.3,929.3 992.5,936.9" fill="none" stroke="#1f1f1f" stroke-width="1.6" stroke-linejoin="round"/><polyline points="1088.8,755.3 1090.5,765.4 1104.1,779 1092.2,784.1 1095.6,794.2 1110.8,804.4 1095.6,807.8 1075.3,821.4 1075.3,840 1073.6,855.3 1063.4,860.3 1056.6,858.6" fill="none" stroke="#1f1f1f" stroke-width="1.6" stroke-linejoin="round"/><polyline points="992.5,936.9 997.6,918.3 1007.8,903.1 1026.4,892.9 1038.3,879.3 1023.1,865.8 1023.1,861.5 1055.3,859.8 1072.2,856.4 1075.6,842 1075.3,840" fill="none" stroke="#1f1f1f" stroke-width="1.6" stroke-linejoin="round"/><polyline points="1076.9,841.7 1095.6,840 1107.5,848.5 1121,845.1 1143,834.9 1161.7,843.4 1180.3,840 1187.1,824.7 1202.4,819.7 1209.2,826.4" fill="none" stroke="#1f1f1f" stroke-width="1.6" stroke-linejoin="round"/><polyline points="1210.8,784.9 1207.5,801 1212.5,809.5 1205.8,819.7 1209.2,826.4" fill="none" stroke="#1f1f1f" stroke-width="1.6" stroke-linejoin="round"/><polyline points="1209.2,826.4 1205.8,843.4 1193.9,855.3 1178.6,862 1163.4,868.8 1149.8,873.9 1148.1,880.7 1166.8,889.2 1170.2,900 1175.1,909.3 1183,919.1 1196.7,928.9" fill="none" stroke="#1f1f1f" stroke-width="1.6" stroke-linejoin="round"/><polyline points="1073.9,853.9 1090.8,869.2 1100,891.2 1092.5,904.7 1079,914.9 1073.9,935.3 1053.6,942 1043.4,952.2 1045.1,975.9 1053.6,981 1031.5,975.9 1038.3,1006.4 1018,1033.6 1014.6,1042" fill="none" stroke="#1f1f1f" stroke-width="1.6" stroke-linejoin="round"/><polyline points="1094.9,880 1100.8,889.8 1093,903.5 1081.3,909.3 1077.3,919.1 1057.8,942.6" fill="none" stroke="#1f1f1f" stroke-width="1.6" stroke-linejoin="round"/><polyline points="1094.9,903.5 1122.3,903.5 1126.2,915.2 1147.8,917.2 1153.6,901.5 1175.1,909.3" fill="none" stroke="#1f1f1f" stroke-width="1.6" stroke-linejoin="round"/><polyline points="1147.8,880 1165.4,887.8 1175.1,899.6 1175.1,909.3" fill="none" stroke="#1f1f1f" stroke-width="1.6" stroke-linejoin="round"/><polyline points="992.5,936.9 987.5,942 990.8,964.1 987.5,982.7 999.3,991.2 984.1,1003.1 982.4,1014.9 995.9,1028.5 1004.4,1042 1016.7,1040.4" fill="none" stroke="#1f1f1f" stroke-width="1.6" stroke-linejoin="round"/><polyline points="923.1,979.3 911.2,998 909.5,1011.5 901,1023.4 900,1026.4 901.7,1048.5 896.6,1065.4 893.2,1084.1 900,1087.5 900,1097.6" fill="none" stroke="#1f1f1f" stroke-width="1.6" stroke-linejoin="round"/><polyline points="923.1,979.3 941.7,986.1 951.9,989.5 968.8,989.5 972.2,1013.2 982.4,1014.9" fill="none" stroke="#1f1f1f" stroke-width="1.6" stroke-linejoin="round"/><polyline points="798.3,1104.4 803.4,1101 808.5,1089.2 803.4,1080.7 822,1068.8 840,1065.8 843.4,1053.9 863.7,1055.6 873.9,1040.3 882.4,1030.2 894.2,1023.4 899.3,1026.8" fill="none" stroke="#1f1f1f" stroke-width="1.6" stroke-linejoin="round"/><polyline points="784.7,1102.7 794.9,1106.1 803.4,1104.4 803.4,1126.4 798.3,1129.8" fill="none" stroke="#1f1f1f" stroke-width="1.6" stroke-linejoin="round"/><polyline points="1001,1045.4 1011.2,1055.6 989.2,1065.8 975.6,1070.8 955.3,1080 950.8,1087.5 933.9,1092.5 920.3,1099.3 900,1097.6" fill="none" stroke="#1f1f1f" stroke-width="1.6" stroke-linejoin="round"/><polyline points="1014.6,1042 1040,1035.3 1046.8,1021.7 1051.9,1028.5 1065.4,1021.7 1080.7,1003.1 1092.5,1013.2 1112.6,1005.2 1116.5,1003.2" fill="none" stroke="#1f1f1f" stroke-width="1.6" stroke-linejoin="round"/><polyline points="900,1097.6 886.4,1097.6 884.7,1123.1 878,1124.7 879.7,1143.4 884.7,1160.3 896.6,1162 913.6,1158.6 927.1,1172.2 930.5,1177.3 930.5,1182.4 935.6,1184.1 949.2,1184.1 955.9,1175.6 967.8,1177.3 976.3,1170.5 983.1,1170.5" fill="none" stroke="#1f1f1f" stroke-width="1.6" stroke-linejoin="round"/><polyline points="822,1190.8 835.6,1199.3 840.7,1207.8 855.9,1218 867.8,1224.7 878,1226.4 881.4,1221.4 898.3,1218 905.1,1211.2 898.3,1207.8 901.7,1195.9 908.5,1189.2 920.3,1190.8 927.1,1195.9 930.5,1182.4" fill="none" stroke="#1f1f1f" stroke-width="1.6" stroke-linejoin="round"/><polyline points="862.7,1228.1 871.2,1234.9 878,1248.5 879.7,1265.4 891.5,1265.4 889.8,1285.8 894.9,1289.2 889.8,1302.7 891.5,1316.3 888.1,1324.7" fill="none" stroke="#1f1f1f" stroke-width="1.6" stroke-linejoin="round"/><polyline points="1211.9,764.7 1223.7,763 1235.6,763" fill="none" stroke="#1f1f1f" stroke-width="1.6" stroke-linejoin="round"/><polyline points="1266.1,776.6 1262.7,791.9 1259.3,798.6" fill="none" stroke="#1f1f1f" stroke-width="1.6" stroke-linejoin="round"/><polyline points="1332.2,771.5 1352.5,768.1 1379.7,769 1396.6,751.2 1433.9,741 1449.2,739.3 1444.1,747.8 1449.2,758 1427.1,768.1 1425.4,776.6" fill="none" stroke="#1f1f1f" stroke-width="1.6" stroke-linejoin="round"/><polyline points="1267.8,800.3 1284.7,798.6 1306.8,805.4 1325.4,795.3 1339,796.9 1335.6,805.4 1349.2,810.5 1354.2,820.7 1344.1,829.2" fill="none" stroke="#1f1f1f" stroke-width="1.6" stroke-linejoin="round"/><polyline points="1425.4,768.1 1401.7,781.7 1389.8,791.9 1383.1,800.3 1371.2,812.2 1374.6,820.7 1386.4,812.2 1406.8,810.5 1411.9,827.5" fill="none" stroke="#1f1f1f" stroke-width="1.6" stroke-linejoin="round"/><polyline points="1371.2,813.9 1362.7,844.4 1354.2,844.4 1342.4,852.9 1339,844.4 1340.7,868.1" fill="none" stroke="#1f1f1f" stroke-width="1.6" stroke-linejoin="round"/><polyline points="1361,849.5 1374.6,856.3" fill="none" stroke="#1f1f1f" stroke-width="1.6" stroke-linejoin="round"/><polyline points="892.5,720 893.9,744.6 895.1,752.7 903.2,761.9 902,767.7 905.5,768.9" fill="none" stroke="#1f1f1f" stroke-width="1.6" stroke-linejoin="round"/><polyline points="897.4,774.7 918.2,770 921.6,772.3 935.5,774.7 942.4,778.1 947.1,786.2 942.4,797.7 936.7,807 937.8,810.5 928.6,811.6 922.8,817.4 924,820.8 926.3,823.2 919.3,832.4 921.6,844 926.3,849.7 937.8,852 942.4,846.3 936.7,832.4 932,819.7 928.6,811.6" fill="none" stroke="#1f1f1f" stroke-width="1.6" stroke-linejoin="round"/><polyline points="918.2,773.5 907.8,780.4 880.1,795.4 869.7,804.7 870.8,815.1 882.4,819.7 893.9,816.2 896.2,823.2 881.2,827.8 880.1,835.9 885.8,841.6 880.1,846.3 881.2,853.2 870.8,852 860.4,849.7 854.7,857.8 845.4,864.7 838.5,857.8 846.6,856.7 848.9,844 847.7,835.9 830.4,834.7 833.9,827.8 820.2,830.5 816.8,842.4 823.6,859.3 820.2,874.6 813.4,879.7 806.6,886.4" fill="none" stroke="#1f1f1f" stroke-width="1.6" stroke-linejoin="round"/><polyline points="939,812.8 941.3,820.8 955.1,823.2 969,825.5 970.2,820.8 981.7,816.2 986.3,823.2 984,827.8 997.9,824.3 999,830.1 1007.1,831.2 1014,823.2 1021,823.2 1030.2,829 1044.1,839.3 1055.6,839.3 1054.5,855.5 1057.9,860.1 1064.9,861.3 1074.1,853.2 1074.1,840.5 1078.7,834.7" fill="none" stroke="#1f1f1f" stroke-width="1.6" stroke-linejoin="round"/><path d="M1361,1164 L1365,1170 L1364,1185 L1360,1200 L1357,1215 L1354,1230 L1350,1235 L1346,1228 L1348,1212 L1351,1195 L1354,1180 L1357,1168 Z" fill="#bed150" stroke="#1f1f1f" stroke-width="2.2"/><path d="M1359,1205 l4,2 l1,8 l-3,4 l-3,-3 Z" fill="#1f1f1f"/><ellipse cx="1360" cy="1170" rx="2" ry="3" fill="#1f1f1f"/><ellipse cx="1356" cy="1183" rx="2.2" ry="3" fill="#1f1f1f"/><ellipse cx="1352" cy="1196" rx="2" ry="2.5" fill="#1f1f1f"/><ellipse cx="1349" cy="1210" rx="2" ry="3" fill="#1f1f1f"/><ellipse cx="1347" cy="1222" rx="2" ry="3" fill="#1f1f1f"/><ellipse cx="1364" cy="1206" rx="2.5" ry="3.5" fill="#1f1f1f"/><ellipse cx="1363" cy="1215" rx="2" ry="2.5" fill="#1f1f1f"/><ellipse cx="1352" cy="1233" rx="1.5" ry="2" fill="#1f1f1f"/><ellipse cx="1348" cy="1239" rx="1.2" ry="1.5" fill="#1f1f1f"/><path d="M1345,1248 L1349,1250 L1349,1258 L1346,1260 L1342,1259 L1342,1252 Z" fill="#bed150" stroke="#1f1f1f" stroke-width="2"/><path d="M1381,1354 L1386,1357 L1388,1366 L1385,1370 L1381,1368 L1379,1360 Z" fill="#bed150" stroke="#1f1f1f" stroke-width="2"/><circle cx="1398.4" cy="1171.7" r="1.5" fill="#1f1f1f"/><circle cx="1386.4" cy="1207" r="1.5" fill="#1f1f1f"/><circle cx="1337.7" cy="1228" r="2.2" fill="#1f1f1f"/><circle cx="1353.5" cy="1299" r="2.2" fill="#1f1f1f"/><circle cx="1379" cy="1319" r="1.5" fill="#1f1f1f"/><circle cx="1376" cy="1331.3" r="2.5" fill="#1f1f1f"/><circle cx="1364" cy="1325" r="2" fill="#1f1f1f"/><circle cx="1382" cy="1354" r="1.5" fill="#1f1f1f"/><circle cx="1372" cy="1320" r="1.2" fill="#1f1f1f"/><circle cx="732.3" cy="1204.7" r="2" fill="#1f1f1f"/><circle cx="729.1" cy="1218.3" r="2.2" fill="#1f1f1f"/><circle cx="740.3" cy="1228.6" r="1.8" fill="#1f1f1f"/><circle cx="756.4" cy="1224.2" r="1.2" fill="#1f1f1f"/><circle cx="765.2" cy="1230.6" r="1.2" fill="#1f1f1f"/><circle cx="736.9" cy="1239.9" r="1.8" fill="#1f1f1f"/><circle cx="757.4" cy="1239.4" r="1.6" fill="#1f1f1f"/><circle cx="744.2" cy="1246.7" r="1.5" fill="#1f1f1f"/><circle cx="740.3" cy="1249.6" r="1.5" fill="#1f1f1f"/><circle cx="751" cy="1251.6" r="1" fill="#1f1f1f"/><circle cx="785.3" cy="1250.6" r="1.5" fill="#1f1f1f"/><circle cx="754.5" cy="1257.9" r="1.7" fill="#1f1f1f"/><circle cx="743.7" cy="1272.6" r="2" fill="#1f1f1f"/><circle cx="784.3" cy="1271.6" r="2" fill="#1f1f1f"/><circle cx="766.2" cy="1325.4" r="2" fill="#1f1f1f"/><ellipse cx="796" cy="1236.9" rx="3.5" ry="2.3" fill="#bed150" stroke="#1f1f1f" stroke-width="1.5" transform="rotate(35 796 1236.9)"/><path d="M1217.4,923.4 L1220,921 L1223.2,918.3 L1226,917.5 L1229.1,916.4 L1229.1,912.1 L1232.2,909.3 L1234,910 L1237.7,908.2 L1231.5,901.1 L1233,900.5 L1238.9,900.3 L1240.8,901.9 L1243,906 L1244.8,911.3 L1244.8,920 L1245.5,928.9 L1240.8,931 L1236,930 L1232,931.5 L1226,931 L1222,931.5 L1217.4,930.8 Z" fill="#1f1f1f"/><path d="M1208.8,904.2 L1212,912 L1218.2,912.5 L1217.4,923.4" fill="none" stroke="#1f1f1f" stroke-width="1.6"/><path d="M622,861 L628,858 L636,858 L638,861 L633,864 L630,868 L634,874 L637,878 L633,881 L627,876 L624,871 L621,868 Z" fill="#1f1f1f"/><path d="M962,1214 L968,1212 L970,1218 L965,1222 L961,1219 Z" fill="#1f1f1f"/></svg>
<div style="position:absolute;left:1537px;top:369.74px;font-size:22.4px;line-height:22.4px;font-weight:400;font-style:normal;color:#1e1e1e;white-space:pre;letter-spacing:-0.034px;">Layer Styling</div>
<svg style="position:absolute;left:2195px;top:370px;" width="23" height="23" viewBox="0 0 23 23"><rect x="1" y="1" width="20" height="20" rx="3" fill="none" stroke="#777" stroke-width="1.4"/><rect x="5" y="9" width="8" height="8" fill="none" stroke="#666" stroke-width="1.5"/><path d="M9,9 V5 H17 V13 H13" fill="none" stroke="#666" stroke-width="1.5"/></svg>
<svg style="position:absolute;left:2223px;top:370px;" width="23" height="23" viewBox="0 0 23 23"><rect x="1" y="1" width="20" height="20" rx="3" fill="none" stroke="#777" stroke-width="1.4"/><path d="M6,6 L16,16 M16,6 L6,16" stroke="#666" stroke-width="3"/></svg>
<div style="position:absolute;left:1534px;top:406px;width:708px;height:48px;background:linear-gradient(#fdfdfd,#f0f0f0);border:2px solid #b2b2b2;border-radius:6px;"></div>
<svg style="position:absolute;left:1544px;top:415px;" width="36" height="28" viewBox="0 0 36 28"><path d="M5,5 C9,1 13,4 18,5.5 C24,7 28,2 31.5,4 C34.5,6 34,13 31,15 C27,17 23,15 18,17 C12,19.5 8,25 4.5,23 C1.5,21 1.5,8 5,5 Z" fill="#dcdcdc" stroke="#8e8e8e" stroke-width="1.8"/></svg>
<div style="position:absolute;left:1585px;top:418.57px;font-size:26.5px;line-height:26.5px;font-weight:400;font-style:normal;color:#111;white-space:pre;letter-spacing:-0.116px;">Colored</div>
<svg style="position:absolute;left:2210px;top:425px;" width="16" height="9" viewBox="0 0 16 9"><path d="M0,0 H16 L8,8.5 Z" fill="#5b5b5b"/></svg>
<div style="position:absolute;left:1534px;top:530px;width:76px;height:941px;background:#5e5e5e;"></div>
<svg style="position:absolute;left:1546px;top:479px;" width="48" height="40" viewBox="0 0 48 40"><g transform="scale(1.42)"><path d="M2,21 L7,8 L21,13 L15,27 Z" fill="#e83838"/><path d="M4.5,15 L7,8 L21,13 L18.5,19.5 Z" fill="#7aa7d8"/><path d="M6,11 L7,8 L21,13 L20,16 Z" fill="#f4e04a"/><path d="M11,21 L18,14 L25,21 L18,28 Z" fill="#e0b070" stroke="#a8742a" stroke-width="1"/><path d="M13,21 L18,26 M15,19 L20,24 M17,17 L22,22 M14,24 L21,17 M12,22 L19,15" stroke="#b88440" stroke-width="0.6"/><path d="M21,16 L30,6" stroke="#a8742a" stroke-width="4" stroke-linecap="round"/><path d="M21,16 L30,6" stroke="#e0a040" stroke-width="2.4" stroke-linecap="round"/></g></svg>
<svg style="position:absolute;left:1541px;top:548px;" width="46" height="28" viewBox="0 0 46 28"><path d="M2,13 L9,2 H43 V25 H9 Z" fill="#fde74c" stroke="#c9a227" stroke-width="2.4"/><text x="11" y="21" font-family="Liberation Mono" font-weight="bold" font-size="16" fill="#222" textLength="29" lengthAdjust="spacingAndGlyphs">abc</text></svg>
<svg style="position:absolute;left:1540px;top:608px;" width="50" height="32" viewBox="0 0 50 32"><path d="M6,16 C0,6 12,0 20,5 C26,0 38,0 42,8 C50,12 48,26 40,28 C32,32 16,32 10,28 C2,26 2,20 6,16 Z" fill="#e8ecf8" stroke="#c8d0e0" stroke-width="1"/><text x="5" y="25" font-family="Liberation Sans" font-weight="bold" font-size="22" fill="#2a2f38">abc</text></svg>
<svg style="position:absolute;left:1542px;top:665px;" width="44" height="50" viewBox="0 0 44 50"><path d="M22,2 L41,13 L22,24 L3,13 Z" fill="#f59090" stroke="#a01010" stroke-width="2.4" stroke-linejoin="round"/><path d="M3,14 L21,25 V47 L3,36 Z" fill="#8ae040" stroke="#3a8a10" stroke-width="2.2" stroke-linejoin="round"/><path d="M23,25 L41,14 V36 L23,47 Z" fill="#fce44a" stroke="#c09010" stroke-width="2.2" stroke-linejoin="round"/></svg>
<svg style="position:absolute;left:1540px;top:728px;" width="50" height="52" viewBox="0 0 50 52"><path d="M12,16 V36 M36,16 V36 M24,14 V38 M12,18 H36" stroke="#c8902e" stroke-width="3.4" stroke-linecap="round" fill="none"/><rect x="14" y="3" width="19" height="12" fill="#e85a5a"/><path d="M17,3 V15 M20,3 V15 M23,3 V15 M26,3 V15 M29,3 V15" stroke="#f08080" stroke-width="0.8"/><rect x="2" y="35" width="19" height="13" fill="#f8e060"/><path d="M5,36 V48 M8,36 V48 M11,36 V48 M14,36 V48 M17,36 V48" stroke="#fff0a0" stroke-width="0.8"/><rect x="27" y="35" width="19" height="13" fill="#8ab8e8"/><path d="M30,36 V48 M33,36 V48 M36,36 V48 M39,36 V48 M42,36 V48" stroke="#b8d4f4" stroke-width="0.8"/><rect x="2" y="32" width="19" height="4" rx="1.5" fill="#d09838"/><rect x="27" y="32" width="19" height="4" rx="1.5" fill="#d09838"/><rect x="14" y="14" width="19" height="4" rx="1.5" fill="#d09838"/></svg>
<svg style="position:absolute;left:1544px;top:795px;" width="40" height="46" viewBox="0 0 40 46"><path d="M5,22 C3,12 10,6 20,8 V3 L30,11 L20,19 V14 C12,12 9,18 11,24 Z" fill="#7ab87a"/><path d="M35,22 C38,32 30,40 20,38 V43 L10,35 L20,27 V32 C28,34 31,28 29,22 Z" fill="#f08a3a"/></svg>
<div style="position:absolute;left:1617px;top:479px;width:640px;height:47px;background:linear-gradient(#fdfdfd,#f0f0f0);border:2px solid #b2b2b2;border-radius:6px;border-right:none;"></div>
<svg style="position:absolute;left:1630px;top:487px;" width="30" height="31" viewBox="0 0 30 31"><rect x="2" y="1.5" width="21" height="6.5" fill="#08c04a" stroke="#06603a" stroke-width="1.8"/><rect x="6" y="12" width="21" height="6.5" fill="#08c04a" stroke="#06603a" stroke-width="1.8"/><rect x="2" y="22.5" width="21" height="6.5" fill="#08c04a" stroke="#06603a" stroke-width="1.8"/></svg>
<div style="position:absolute;left:1666.5px;top:488.57px;font-size:26.5px;line-height:26.5px;font-weight:400;font-style:normal;color:#111;white-space:pre;letter-spacing:0.201px;">Single Symbol</div>
<div style="position:absolute;left:1656px;top:590px;width:122px;height:122px;background:#bfd051;border:2px solid #4c4c3c;"></div>
<div style="position:absolute;left:1828px;top:538px;width:308px;height:223px;background:#fff;border:1.5px solid #b8b8b8;"></div>
<div style="position:absolute;left:1830px;top:540px;width:304px;height:36px;background:#dcdcdc;"></div>
<svg style="position:absolute;left:1842px;top:554px;" width="16" height="9" viewBox="0 0 16 9"><path d="M0,0 H16 L8,8.5 Z" fill="#5b5b5b"/></svg>
<div style="position:absolute;left:1876px;top:542px;width:32px;height:32px;background:#bfd051;border:2px solid #5c5c34;"></div>
<div style="position:absolute;left:1921px;top:544.49px;font-size:26px;line-height:26px;font-weight:700;font-style:normal;color:#000;white-space:pre;letter-spacing:-0.391px;">Fill</div>
<div style="position:absolute;left:1916px;top:578px;width:32px;height:32px;background:#bfd051;border:2px solid #5c5c34;"></div>
<div style="position:absolute;left:1961px;top:580.99px;font-size:26px;line-height:26px;font-weight:400;font-style:normal;color:#1e1e1e;white-space:pre;letter-spacing:0.371px;">Simple Fill</div>
<div style="position:absolute;left:2148px;top:538px;width:56px;height:48px;background:linear-gradient(#fdfdfd,#f0f0f0);border:2px solid #b2b2b2;border-radius:6px;"></div>
<svg style="position:absolute;left:2161px;top:548px;" width="30" height="30" viewBox="0 0 30 30"><path d="M10,2 H20 V10 H28 V20 H20 V28 H10 V20 H2 V10 H10 Z" fill="#fff" stroke="#4a8a4a" stroke-width="2"/><path d="M15,6 V24 M6,15 H24" stroke="#4a8a4a" stroke-width="4"/></svg>
<div style="position:absolute;left:2148px;top:595px;width:56px;height:47px;background:linear-gradient(#fdfdfd,#f0f0f0);border:2px solid #b2b2b2;border-radius:6px;"></div>
<svg style="position:absolute;left:2161px;top:609px;" width="30" height="18" viewBox="0 0 30 18"><rect x="2" y="4" width="26" height="11" fill="#fff" stroke="#e4caca" stroke-width="2"/><rect x="6" y="8" width="18" height="3" fill="#e0d0d0"/></svg>
<div style="position:absolute;left:2148px;top:651px;width:56px;height:47px;background:linear-gradient(#fdfdfd,#f0f0f0);border:2px solid #b2b2b2;border-radius:6px;"></div>
<svg style="position:absolute;left:2161px;top:660px;" width="30" height="30" viewBox="0 0 30 30"><rect x="2" y="7" width="21" height="21" fill="#e4e4e4" stroke="#d0d0d0" stroke-width="1.5"/><rect x="7" y="2" width="21" height="21" fill="#f4f4f4" stroke="#cfcfcf" stroke-width="1.8"/><rect x="19" y="18" width="10" height="10" fill="#d8d6d0"/></svg>
<div style="position:absolute;left:2216px;top:538px;width:40px;height:48px;background:linear-gradient(#fdfdfd,#f0f0f0);border:2px solid #c4c4c4;border-radius:6px;"></div>
<div style="position:absolute;left:2216px;top:595px;width:40px;height:47px;background:linear-gradient(#fdfdfd,#f0f0f0);border:2px solid #c4c4c4;border-radius:6px;"></div>
<div style="position:absolute;left:2216px;top:651px;width:40px;height:47px;background:linear-gradient(#fdfdfd,#f0f0f0);border:2px solid #c4c4c4;border-radius:6px;"></div>
<svg style="position:absolute;left:2222px;top:552px;" width="20" height="20" viewBox="0 0 20 20"><path d="M20,0 L20,18 L4,18 Z" fill="#e6e6e6" stroke="#cfcfcf" stroke-width="1.5"/></svg>
<svg style="position:absolute;left:2222px;top:610px;" width="20" height="20" viewBox="0 0 20 20"><path d="M20,18 L20,0 L4,0 Z" fill="#e6e6e6" stroke="#cfcfcf" stroke-width="1.5"/></svg>
<svg style="position:absolute;left:2226px;top:664px;" width="16" height="24" viewBox="0 0 16 24"><path d="M10,8 L16,2 M10,8 L16,12" stroke="#d0d0d0" stroke-width="1.5"/><rect x="2" y="14" width="14" height="10" rx="2" fill="#d8d6cc"/></svg>
<div style="position:absolute;left:1617px;top:774px;width:625px;height:2px;background:#cfcfcf;"></div>
<div style="position:absolute;left:1617px;top:776px;width:625px;height:1px;background:#fafafa;"></div>
<div style="position:absolute;left:1617px;top:807.99px;font-size:26px;line-height:26px;font-weight:400;font-style:normal;color:#1e1e1e;white-space:pre;letter-spacing:0.172px;">Color</div>
<div style="position:absolute;left:1725px;top:793px;width:505px;height:54px;background:linear-gradient(#fdfdfd,#f0f0f0);border:2px solid #b2b2b2;border-radius:6px;"></div>
<div style="position:absolute;left:1734px;top:803px;width:487px;height:33px;background:#bfd051;border-radius:6px;"></div>
<div style="position:absolute;left:2232px;top:793px;width:40px;height:54px;background:linear-gradient(#fdfdfd,#f0f0f0);border:2px solid #b2b2b2;border-radius:6px;"></div>
<svg style="position:absolute;left:2236px;top:813px;" width="8" height="10" viewBox="0 0 8 10"><path d="M0,0 H8 L8,8 Z" fill="#5b5b5b"/></svg>
<div style="position:absolute;left:1617px;top:874.99px;font-size:26px;line-height:26px;font-weight:400;font-style:normal;color:#1e1e1e;white-space:pre;letter-spacing:0.692px;">Opacity</div>
<div style="position:absolute;left:1726px;top:880px;width:236px;height:10px;background:#5a9ee8;border:1px solid #3f78bd;border-radius:5px;"></div>
<div style="position:absolute;left:1948px;top:872px;width:26px;height:26px;background:linear-gradient(#ffffff,#f0f0f0);border:1.5px solid #a8a8a8;border-radius:6px;"></div>
<div style="position:absolute;left:1983px;top:865px;width:198px;height:42px;background:#fff;border:2px solid #b4b4b4;border-radius:6px;"></div>
<div style="position:absolute;left:2151px;top:867px;width:2px;height:38px;background:#d2d2d2;"></div>
<svg style="position:absolute;left:2157px;top:873px;" width="17" height="26" viewBox="0 0 17 26"><path d="M0,8 L8.5,0 L17,8 Z" fill="#a0a0a0"/><path d="M0,17 H17 L8.5,25 Z" fill="#5b5b5b"/></svg>
<div style="position:absolute;left:1992px;top:873.99px;font-size:26px;line-height:26px;font-weight:400;font-style:normal;color:#1e1e1e;white-space:pre;letter-spacing:0.513px;">100.0 %</div>
<svg style="position:absolute;left:2199px;top:868px;" width="40" height="36" viewBox="0 0 40 36"><path d="M11,5 L3,18 L11,31" fill="#d8d8d8" stroke="#888" stroke-width="1.5"/><rect x="11" y="4" width="26" height="28" fill="#f4f4f4" stroke="#777" stroke-width="2"/><path d="M17,11 H34 M17,18 H34 M17,25 H34" stroke="#666" stroke-width="2"/></svg>
<div style="position:absolute;left:1617px;top:935.99px;font-size:26px;line-height:26px;font-weight:400;font-style:normal;color:#1e1e1e;white-space:pre;letter-spacing:0.188px;">Unit</div>
<div style="position:absolute;left:1725px;top:925px;width:540px;height:46px;background:linear-gradient(#fdfdfd,#f0f0f0);border:2px solid #b2b2b2;border-radius:6px;border-right:none;"></div>
<div style="position:absolute;left:1735px;top:936.57px;font-size:26.5px;line-height:26.5px;font-weight:400;font-style:normal;color:#111;white-space:pre;letter-spacing:0.307px;">Millimeters</div>
<svg style="position:absolute;left:2222px;top:944px;" width="16" height="9" viewBox="0 0 16 9"><path d="M0,0 H16 L8,8.5 Z" fill="#5b5b5b"/></svg>
<div style="position:absolute;left:1617px;top:980px;width:625px;height:2px;background:#cfcfcf;"></div>
<div style="position:absolute;left:1617px;top:982px;width:625px;height:1px;background:#fafafa;"></div>
<div style="position:absolute;left:1617px;top:995px;width:577px;height:46px;background:#fff;border:2px solid #b4b4b4;border-radius:6px;"></div>
<div style="position:absolute;left:2152px;top:997px;width:2px;height:42px;background:#d6d6d6;"></div>
<div style="position:absolute;left:2154px;top:997px;width:38px;height:42px;background:linear-gradient(#fbfbfb,#efefef);border-radius:0 5px 5px 0;"></div>
<svg style="position:absolute;left:2163px;top:1014px;" width="16" height="9" viewBox="0 0 16 9"><path d="M0,0 H16 L8,8.5 Z" fill="#5b5b5b"/></svg>
<svg style="position:absolute;left:1636px;top:1005px;" width="26" height="26" viewBox="0 0 26 26"><circle cx="11" cy="11" r="8" fill="none" stroke="#777" stroke-width="2.2"/><path d="M17,17 L23,23" stroke="#777" stroke-width="2.8" stroke-linecap="round"/></svg>
<div style="position:absolute;left:1677px;top:1004.99px;font-size:26px;line-height:26px;font-weight:400;font-style:normal;color:#1e1e1e;white-space:pre;letter-spacing:0.342px;">Favorites</div>
<svg style="position:absolute;left:2108px;top:1007px;" width="28" height="22" viewBox="0 0 28 22"><path d="M0,11 L8,1 H27 V21 H8 Z" fill="#a8a8a8"/><path d="M12,5 L22,17 M22,5 L12,17" stroke="#fff" stroke-width="2.6"/></svg>
<svg style="position:absolute;left:2212px;top:1000px;" width="30" height="38" viewBox="0 0 30 38"><circle cx="10" cy="10" r="6" fill="#d0672f"/><path d="M22,10 L30,3" stroke="#5a8fd0" stroke-width="3" stroke-linecap="round"/><rect x="3" y="21" width="12" height="12" fill="#8fb88f" stroke="#4f8a4f" stroke-width="1.5"/><text x="20" y="33" font-family="Liberation Sans" font-size="17" fill="#333">a</text></svg>
<div style="position:absolute;left:1617px;top:1051px;width:625px;height:194px;background:#fff;border:1.5px solid #c0c0c0;border-right:none;"></div>
<div style="position:absolute;left:1629px;top:1069.99px;font-size:26px;line-height:26px;font-weight:700;font-style:normal;color:#222;white-space:pre;letter-spacing:0.573px;">Project Styles</div>
<div style="position:absolute;left:1627px;top:1099px;width:582px;height:2px;background:#888;"></div>
<div style="position:absolute;left:1629px;top:1119.99px;font-size:26px;line-height:26px;font-weight:700;font-style:normal;color:#222;white-space:pre;letter-spacing:0.411px;">Default</div>
<div style="position:absolute;left:1627px;top:1149px;width:582px;height:2px;background:#888;"></div>
<div style="position:absolute;left:1689px;top:1193px;width:126px;height:52px;background:linear-gradient(120deg,#1d0c9a 0%,#6a0aa8 25%,#b42e90 50%,#e0636a 75%,#f7a03c 100%);border:2px solid #333;border-bottom:none;"></div>
<div style="position:absolute;left:1951px;top:1195px;width:123px;height:50px;background:#999;border:1px solid #c0c0c0;border-bottom:none;"></div>
<div style="position:absolute;left:2224px;top:1052px;width:18px;height:192px;background:#ececec;border-left:1px solid #d8d8d8;"></div>
<svg style="position:absolute;left:2228px;top:1059px;" width="14" height="9" viewBox="0 0 14 9"><path d="M0,8 L7,0 L14,8 Z" fill="#5b5b5b"/></svg>
<div style="position:absolute;left:2225px;top:1078px;width:17px;height:2px;background:#c8c8c8;"></div>
<div style="position:absolute;left:2225px;top:1080px;width:17px;height:52px;background:#fafafa;"></div>
<div style="position:absolute;left:2225px;top:1132px;width:17px;height:84px;background:#e0e0e0;border:1px solid #cfcfcf;"></div>
<div style="position:absolute;left:2225px;top:1216px;width:17px;height:2px;background:#c8c8c8;"></div>
<svg style="position:absolute;left:2228px;top:1226px;" width="14" height="9" viewBox="0 0 14 9"><path d="M0,0 H14 L7,8 Z" fill="#5b5b5b"/></svg>
<div style="position:absolute;left:1617px;top:1259px;width:47px;height:45px;background:#d8d8d8;border:2px solid #b0b0b0;border-radius:6px;"></div>
<svg style="position:absolute;left:1626px;top:1267px;" width="28" height="27" viewBox="0 0 28 27"><rect x="1" y="1" width="26" height="25" fill="none" stroke="#6c9bd0" stroke-width="1.6"/><rect x="3" y="3" width="6" height="6" fill="#6c9bd0"/><rect x="3" y="11" width="6" height="6" fill="#6c9bd0"/><rect x="3" y="19" width="6" height="6" fill="#6c9bd0"/><rect x="11" y="3" width="6" height="6" fill="#6c9bd0"/><rect x="11" y="11" width="6" height="6" fill="#6c9bd0"/><rect x="11" y="19" width="6" height="6" fill="#6c9bd0"/><rect x="19" y="3" width="6" height="6" fill="#6c9bd0"/><rect x="19" y="11" width="6" height="6" fill="#6c9bd0"/><rect x="19" y="19" width="6" height="6" fill="#6c9bd0"/></svg>
<svg style="position:absolute;left:1673px;top:1267px;" width="29" height="27" viewBox="0 0 29 27"><rect x="1" y="1" width="26" height="25" fill="#f0f4fa" stroke="#6c9bd0" stroke-width="1.6"/><rect x="1" y="1" width="26" height="5" fill="#6c9bd0"/><path d="M4,11 H9 M12,11 H24 M4,16 H9 M12,16 H24 M4,21 H9 M12,21 H24" stroke="#6c9bd0" stroke-width="2"/></svg>
<div style="position:absolute;left:1889px;top:1259px;width:193px;height:46px;background:linear-gradient(#fdfdfd,#f0f0f0);border:2px solid #b2b2b2;border-radius:6px;"></div>
<div style="position:absolute;left:1898px;top:1269.57px;font-size:26.5px;line-height:26.5px;font-weight:400;font-style:normal;color:#111;white-space:pre;letter-spacing:-0.301px;">Save Symbol...</div>
<div style="position:absolute;left:2094px;top:1259px;width:170px;height:46px;background:linear-gradient(#fdfdfd,#f0f0f0);border:2px solid #b2b2b2;border-radius:6px;border-right:none;"></div>
<div style="position:absolute;left:2103px;top:1269.57px;font-size:26.5px;line-height:26.5px;font-weight:400;font-style:normal;color:#111;white-space:pre;letter-spacing:-0.109px;">Advanced</div>
<svg style="position:absolute;left:2228px;top:1279px;" width="14" height="8" viewBox="0 0 14 8"><path d="M0,0 H14 L7,7 Z" fill="#5b5b5b"/></svg>
<svg style="position:absolute;left:1624px;top:1354px;" width="18" height="24" viewBox="0 0 18 24"><path d="M1,1 L16,12 L1,23 Z" fill="#2a2a2a"/></svg>
<div style="position:absolute;left:1661px;top:1353.57px;font-size:26.5px;line-height:26.5px;font-weight:700;font-style:normal;color:#222;white-space:pre;letter-spacing:-0.142px;">Layer Rendering</div>
<div style="position:absolute;left:1616px;top:1384px;width:626px;height:27px;background:linear-gradient(#fdfdfd,#f0f0f0);border-top:1px solid #d8d8d8;"></div>
<svg style="position:absolute;left:1624px;top:1391px;" width="9" height="14" viewBox="0 0 9 14"><path d="M8,0 L0,7 L8,14 Z" fill="#5b5b5b"/></svg>
<div style="position:absolute;left:1641px;top:1385px;width:1.5px;height:26px;background:#d0d0d0;"></div>
<div style="position:absolute;left:2185px;top:1385px;width:28px;height:26px;background:#e2e2e2;border-left:1px solid #cdcdcd;border-right:1px solid #cdcdcd;"></div>
<svg style="position:absolute;left:2222px;top:1391px;" width="9" height="14" viewBox="0 0 9 14"><path d="M0,0 L8,7 L0,14 Z" fill="#5b5b5b"/></svg>
<div style="position:absolute;left:1617px;top:1424px;width:47px;height:46px;background:linear-gradient(#fdfdfd,#f0f0f0);border:2px solid #b2b2b2;border-radius:6px;"></div>
<svg style="position:absolute;left:1626px;top:1432px;" width="30" height="30" viewBox="0 0 30 30"><path d="M3,12 L12,3 V8 C22,8 27,13 26,20 C25,26 20,28 15,28 V24 C19,24 21,22 21,19 C21,15 17,13 12,13 V19 Z" fill="#f08a3a" stroke="#d06a1a" stroke-width="1"/></svg>
<div style="position:absolute;left:1677px;top:1424px;width:47px;height:46px;background:linear-gradient(#fdfdfd,#f0f0f0);border:2px solid #b2b2b2;border-radius:6px;"></div>
<svg style="position:absolute;left:1686px;top:1432px;" width="30" height="30" viewBox="0 0 30 30"><path d="M27,12 L18,3 V8 C8,8 3,13 4,20 C5,26 10,28 15,28 V24 C11,24 9,22 9,19 C9,15 13,13 18,13 V19 Z" fill="#7ab87a" stroke="#4a8a4a" stroke-width="1"/></svg>
<div style="position:absolute;left:1878px;top:1434px;width:28px;height:28px;background:#fff;border:2px solid #b4b4b4;border-radius:2px;"></div>
<svg style="position:absolute;left:1883px;top:1438px;" width="19" height="20" viewBox="0 0 19 20"><path d="M2,10 L7,17 L17,2" fill="none" stroke="#1e1e1e" stroke-width="3"/></svg>
<div style="position:absolute;left:1917px;top:1435.57px;font-size:26.5px;line-height:26.5px;font-weight:400;font-style:normal;color:#1e1e1e;white-space:pre;letter-spacing:0.270px;">Live update</div>
<div style="position:absolute;left:2082px;top:1424px;width:160px;height:47px;background:linear-gradient(#fdfdfd,#f0f0f0);border:2px solid #b2b2b2;border-radius:6px;"></div>
<div style="position:absolute;left:2128px;top:1435.57px;font-size:26.5px;line-height:26.5px;font-weight:400;font-style:normal;color:#111;white-space:pre;letter-spacing:0.341px;">Apply</div>
<div style="position:absolute;left:5px;top:1485px;width:426px;height:47px;background:#fff;border:2px solid #b4b4b4;border-radius:6px;"></div>
<svg style="position:absolute;left:20px;top:1494px;" width="28" height="30" viewBox="0 0 28 30"><circle cx="12" cy="12" r="8.5" fill="none" stroke="#7a7a7a" stroke-width="2.2"/><path d="M18,18 L25,25" stroke="#7a7a7a" stroke-width="3" stroke-linecap="round"/></svg>
<div style="position:absolute;left:63px;top:1497.84px;font-size:25px;line-height:25px;font-weight:400;font-style:normal;color:#808080;white-space:pre;letter-spacing:0.793px;">Type to locate (⌘K)</div>
<div style="position:absolute;left:529px;top:1497.95px;font-size:22.5px;line-height:22.5px;font-weight:400;font-style:normal;color:#1e1e1e;white-space:pre;letter-spacing:0.292px;">Coordinate</div>
<div style="position:absolute;left:651px;top:1485px;width:160px;height:44px;background:#fff;border:2px solid #b4b4b4;border-radius:6px;"></div>
<div style="position:absolute;left:668px;top:1497.95px;font-size:22.5px;line-height:22.5px;font-weight:400;font-style:normal;color:#1e1e1e;white-space:pre;letter-spacing:0.109px;">11.1°,67.46°</div>
<svg style="position:absolute;left:818px;top:1490px;" width="36" height="36" viewBox="0 0 36 36"><path d="M4,9 C4,4 10,2 14,4 L22,9 C26,12 26,18 22,22 L16,28 C12,31 6,29 4,24 Z" fill="#fff" stroke="#111" stroke-width="2"/><path d="M10,8 L13,18" stroke="#111" stroke-width="3"/><circle cx="13" cy="22" r="1.6" fill="#111"/><circle cx="16" cy="26" r="5" fill="#fff" stroke="#222" stroke-width="1.6"/><circle cx="20" cy="29" r="6" fill="#d8b8b8" opacity="0.6"/><path d="M24,4 L30,2 M26,10 L32,9" stroke="#111" stroke-width="1.5" stroke-dasharray="2,2"/></svg>
<div style="position:absolute;left:878px;top:1497.95px;font-size:22.5px;line-height:22.5px;font-weight:400;font-style:normal;color:#1e1e1e;white-space:pre;letter-spacing:-0.059px;">Scale</div>
<div style="position:absolute;left:943px;top:1485px;width:185px;height:44px;background:#fff;border:2px solid #b4b4b4;border-radius:6px;"></div>
<div style="position:absolute;left:1086px;top:1487px;width:2px;height:40px;background:#d2d2d2;"></div>
<div style="position:absolute;left:1088px;top:1487px;width:38px;height:40px;background:linear-gradient(#fbfbfb,#ededed);border-radius:0 5px 5px 0;"></div>
<svg style="position:absolute;left:1097px;top:1502px;" width="16" height="9" viewBox="0 0 16 9"><path d="M0,0 H16 L8,8.5 Z" fill="#5b5b5b"/></svg>
<div style="position:absolute;left:949px;top:1497.95px;font-size:22.5px;line-height:22.5px;font-weight:400;font-style:normal;color:#1e1e1e;white-space:pre;letter-spacing:0.272px;">1:31893796</div>
<svg style="position:absolute;left:1150px;top:1492px;" width="28" height="34" viewBox="0 0 28 34"><path d="M7,14 V10 A7,7 0 0 1 21,10 V14" fill="none" stroke="#6e6e6e" stroke-width="3"/><rect x="3" y="14" width="22" height="18" rx="3" fill="#6e6e6e"/></svg>
<div style="position:absolute;left:1195px;top:1497.95px;font-size:22.5px;line-height:22.5px;font-weight:400;font-style:normal;color:#1e1e1e;white-space:pre;letter-spacing:0.495px;">Magnifier</div>
<div style="position:absolute;left:1301px;top:1485px;width:185px;height:44px;background:#fff;border:2px solid #b4b4b4;border-radius:6px;"></div>
<div style="position:absolute;left:1456px;top:1487px;width:2px;height:40px;background:#d2d2d2;"></div>
<svg style="position:absolute;left:1461px;top:1494px;" width="17" height="28" viewBox="0 0 17 28"><path d="M0,8 L8.5,0 L17,8 Z M0,19 H17 L8.5,27 Z" fill="#5b5b5b"/></svg>
<div style="position:absolute;left:1310px;top:1497.95px;font-size:22.5px;line-height:22.5px;font-weight:400;font-style:normal;color:#1e1e1e;white-space:pre;letter-spacing:-0.137px;">100%</div>
<div style="position:absolute;left:1504px;top:1497.95px;font-size:22.5px;line-height:22.5px;font-weight:400;font-style:normal;color:#1e1e1e;white-space:pre;letter-spacing:0.398px;">Rotation</div>
<div style="position:absolute;left:1611px;top:1487px;width:185px;height:42px;background:#fff;border:2px solid #b4b4b4;border-radius:6px;"></div>
<div style="position:absolute;left:1765px;top:1489px;width:2px;height:38px;background:#d2d2d2;"></div>
<svg style="position:absolute;left:1771px;top:1495px;" width="17" height="28" viewBox="0 0 17 28"><path d="M0,8 L8.5,0 L17,8 Z M0,19 H17 L8.5,27 Z" fill="#5b5b5b"/></svg>
<div style="position:absolute;left:1621px;top:1497.95px;font-size:22.5px;line-height:22.5px;font-weight:400;font-style:normal;color:#1e1e1e;white-space:pre;letter-spacing:0.694px;">0.0 °</div>
<div style="position:absolute;left:1808px;top:1494px;width:28px;height:28px;background:#fff;border:2px solid #b4b4b4;border-radius:2px;"></div>
<svg style="position:absolute;left:1813px;top:1498px;" width="19" height="20" viewBox="0 0 19 20"><path d="M2,10 L7,17 L17,2" fill="none" stroke="#1e1e1e" stroke-width="3"/></svg>
<div style="position:absolute;left:1847px;top:1497.95px;font-size:22.5px;line-height:22.5px;font-weight:400;font-style:normal;color:#1e1e1e;white-space:pre;letter-spacing:-0.299px;">Render</div>
<svg style="position:absolute;left:1951px;top:1493px;" width="34" height="30" viewBox="0 0 34 30"><ellipse cx="17" cy="15" rx="15" ry="13" fill="none" stroke="#6e6e6e" stroke-width="2"/><ellipse cx="17" cy="15" rx="7" ry="13" fill="none" stroke="#6e6e6e" stroke-width="1.8"/><path d="M2,15 H32 M5,8 H29 M5,22 H29" stroke="#6e6e6e" stroke-width="1.8"/></svg>
<div style="position:absolute;left:1989px;top:1497.95px;font-size:22.5px;line-height:22.5px;font-weight:400;font-style:normal;color:#1e1e1e;white-space:pre;letter-spacing:-0.092px;">EPSG:4326</div>
<svg style="position:absolute;left:2154px;top:1493px;" width="36" height="34" viewBox="0 0 36 34"><path d="M17,2 C26,2 33,7 33,14 C33,21 26,26 17,26 L22,32 L10,25 C5,23 1,19 1,14 C1,7 8,2 17,2 Z" fill="#6e6e6e"/><circle cx="9" cy="14" r="2.5" fill="#fff"/><circle cx="17" cy="14" r="2.5" fill="#fff"/><circle cx="25" cy="14" r="2.5" fill="#fff"/></svg>

</body></html>
